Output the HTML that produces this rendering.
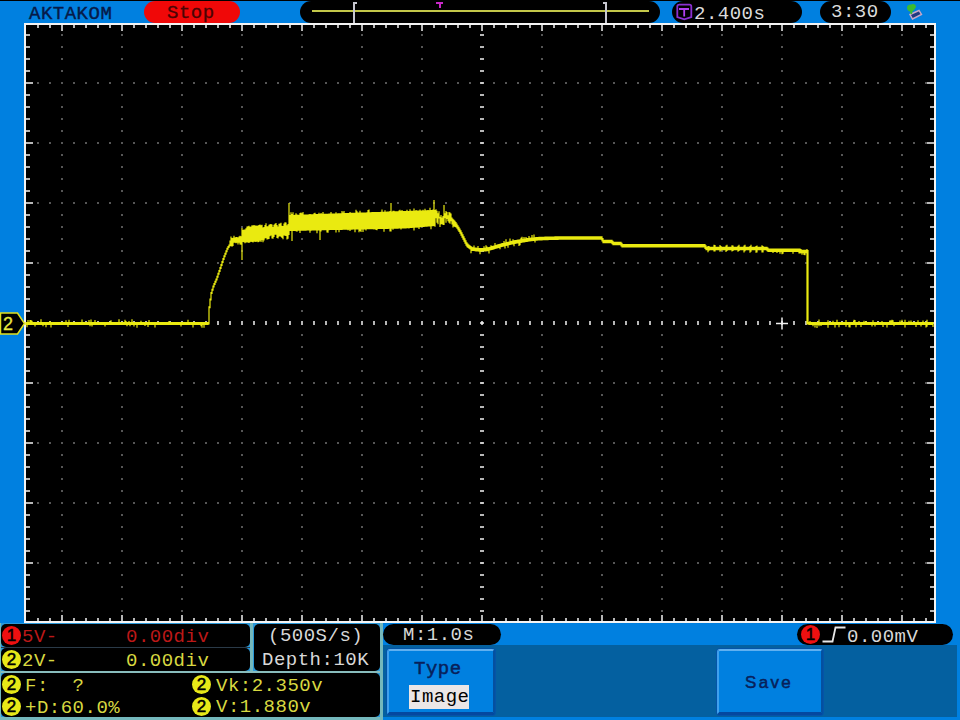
<!DOCTYPE html>
<html><head><meta charset="utf-8">
<style>
html,body{margin:0;padding:0}
body{width:960px;height:720px;overflow:hidden;position:relative;background:#0080e0;font-family:"Liberation Mono",monospace}
.a{position:absolute}
.t{position:absolute;font-size:19px;line-height:19px;letter-spacing:0.5px;white-space:pre}
.pill{position:absolute;background:#000;border-radius:11px}
.box{position:absolute;background:#000;border-radius:5px}
.circ{position:absolute;border-radius:50%;font-size:17px;line-height:20px;-webkit-text-stroke:0.5px #000;text-align:center;color:#000;font-family:"Liberation Sans",sans-serif}
</style></head><body>
<div class="a" style="left:0;top:0;width:960px;height:1px;background:#000"></div>
<div class="t" style="left:29px;top:5px;color:#061a48;-webkit-text-stroke:0.4px #061a48">AKTAKOM</div>
<div class="pill" style="left:144px;top:1px;width:96px;height:22px;background:#f00808"></div>
<div class="t" style="left:167px;top:4px;color:#4a0404;-webkit-text-stroke:0.3px #4a0404">Stop</div>
<div class="pill" style="left:300px;top:1px;width:360px;height:22px"></div>
<div class="a" style="left:312px;top:10px;width:337px;height:2px;background:#c4c84a"></div>
<div class="a" style="left:353px;top:2px;width:2px;height:21px;background:#c8c8d0"></div>
<div class="a" style="left:353px;top:2px;width:4px;height:2px;background:#c8c8d0"></div>
<div class="a" style="left:605px;top:2px;width:2px;height:21px;background:#c8c8d0"></div>
<div class="a" style="left:603px;top:2px;width:4px;height:2px;background:#c8c8d0"></div>
<div class="a" style="left:436px;top:2px;width:7px;height:2px;background:#c828c8"></div>
<div class="a" style="left:439px;top:2px;width:2px;height:6px;background:#c828c8"></div>
<div class="pill" style="left:672px;top:1px;width:130px;height:22px"></div>
<svg class="a" style="left:674px;top:2px" width="20" height="20" viewBox="0 0 20 20">
<path d="M5 2.7h10.5a1.8 1.8 0 0 1 1.8 1.8v10.5l-7 2.3l-7-2.3v-10.5a1.8 1.8 0 0 1 1.8-1.8z" fill="none" stroke="#8a30d0" stroke-width="1.8"/>
<path d="M5 7h10M10.2 7v7.5" stroke="#b040f0" stroke-width="1.8" fill="none"/>
</svg>
<div class="t" style="left:694px;top:5px;color:#dcdcdc">2.400s</div>
<div class="pill" style="left:820px;top:1px;width:71px;height:22px"></div>
<div class="t" style="left:831px;top:3px;color:#dcdcdc">3:30</div>
<svg class="a" style="left:904px;top:2px" width="20" height="20" viewBox="0 0 20 20">
<path d="M6 12.5l9-4l2.5 4l-9 4.5z" fill="#203a80" stroke="#c8a8c8" stroke-width="1.4"/>
<path d="M3 5.5c0-2.5 2.5-3.5 4.5-3c2-1 4.5 0 4.5 2.5l-2 3l-1.5 1.5l-0.5 2.5l-1.5 0l-0.5-2.5c-2-0.5-3-2-3-4z" fill="#3cbc30"/>
</svg>
<svg class="a" style="left:0;top:0" width="960" height="720">
<rect x="24" y="23" width="912" height="600" fill="#f4f4f4"/>
<rect x="26" y="25" width="908" height="596" fill="#000"/>
<path d="M37.2 82.2h1.6v1.6h-1.6zM49.2 82.2h1.6v1.6h-1.6zM61.2 82.2h1.6v1.6h-1.6zM73.2 82.2h1.6v1.6h-1.6zM85.2 82.2h1.6v1.6h-1.6zM97.2 82.2h1.6v1.6h-1.6zM109.2 82.2h1.6v1.6h-1.6zM121.2 82.2h1.6v1.6h-1.6zM133.2 82.2h1.6v1.6h-1.6zM145.2 82.2h1.6v1.6h-1.6zM157.2 82.2h1.6v1.6h-1.6zM169.2 82.2h1.6v1.6h-1.6zM181.2 82.2h1.6v1.6h-1.6zM193.2 82.2h1.6v1.6h-1.6zM205.2 82.2h1.6v1.6h-1.6zM217.2 82.2h1.6v1.6h-1.6zM229.2 82.2h1.6v1.6h-1.6zM241.2 82.2h1.6v1.6h-1.6zM253.2 82.2h1.6v1.6h-1.6zM265.2 82.2h1.6v1.6h-1.6zM277.2 82.2h1.6v1.6h-1.6zM289.2 82.2h1.6v1.6h-1.6zM301.2 82.2h1.6v1.6h-1.6zM313.2 82.2h1.6v1.6h-1.6zM325.2 82.2h1.6v1.6h-1.6zM337.2 82.2h1.6v1.6h-1.6zM349.2 82.2h1.6v1.6h-1.6zM361.2 82.2h1.6v1.6h-1.6zM373.2 82.2h1.6v1.6h-1.6zM385.2 82.2h1.6v1.6h-1.6zM397.2 82.2h1.6v1.6h-1.6zM409.2 82.2h1.6v1.6h-1.6zM421.2 82.2h1.6v1.6h-1.6zM433.2 82.2h1.6v1.6h-1.6zM445.2 82.2h1.6v1.6h-1.6zM457.2 82.2h1.6v1.6h-1.6zM469.2 82.2h1.6v1.6h-1.6zM481.2 82.2h1.6v1.6h-1.6zM493.2 82.2h1.6v1.6h-1.6zM505.2 82.2h1.6v1.6h-1.6zM517.2 82.2h1.6v1.6h-1.6zM529.2 82.2h1.6v1.6h-1.6zM541.2 82.2h1.6v1.6h-1.6zM553.2 82.2h1.6v1.6h-1.6zM565.2 82.2h1.6v1.6h-1.6zM577.2 82.2h1.6v1.6h-1.6zM589.2 82.2h1.6v1.6h-1.6zM601.2 82.2h1.6v1.6h-1.6zM613.2 82.2h1.6v1.6h-1.6zM625.2 82.2h1.6v1.6h-1.6zM637.2 82.2h1.6v1.6h-1.6zM649.2 82.2h1.6v1.6h-1.6zM661.2 82.2h1.6v1.6h-1.6zM673.2 82.2h1.6v1.6h-1.6zM685.2 82.2h1.6v1.6h-1.6zM697.2 82.2h1.6v1.6h-1.6zM709.2 82.2h1.6v1.6h-1.6zM721.2 82.2h1.6v1.6h-1.6zM733.2 82.2h1.6v1.6h-1.6zM745.2 82.2h1.6v1.6h-1.6zM757.2 82.2h1.6v1.6h-1.6zM769.2 82.2h1.6v1.6h-1.6zM781.2 82.2h1.6v1.6h-1.6zM793.2 82.2h1.6v1.6h-1.6zM805.2 82.2h1.6v1.6h-1.6zM817.2 82.2h1.6v1.6h-1.6zM829.2 82.2h1.6v1.6h-1.6zM841.2 82.2h1.6v1.6h-1.6zM853.2 82.2h1.6v1.6h-1.6zM865.2 82.2h1.6v1.6h-1.6zM877.2 82.2h1.6v1.6h-1.6zM889.2 82.2h1.6v1.6h-1.6zM901.2 82.2h1.6v1.6h-1.6zM913.2 82.2h1.6v1.6h-1.6zM925.2 82.2h1.6v1.6h-1.6zM37.2 142.2h1.6v1.6h-1.6zM49.2 142.2h1.6v1.6h-1.6zM61.2 142.2h1.6v1.6h-1.6zM73.2 142.2h1.6v1.6h-1.6zM85.2 142.2h1.6v1.6h-1.6zM97.2 142.2h1.6v1.6h-1.6zM109.2 142.2h1.6v1.6h-1.6zM121.2 142.2h1.6v1.6h-1.6zM133.2 142.2h1.6v1.6h-1.6zM145.2 142.2h1.6v1.6h-1.6zM157.2 142.2h1.6v1.6h-1.6zM169.2 142.2h1.6v1.6h-1.6zM181.2 142.2h1.6v1.6h-1.6zM193.2 142.2h1.6v1.6h-1.6zM205.2 142.2h1.6v1.6h-1.6zM217.2 142.2h1.6v1.6h-1.6zM229.2 142.2h1.6v1.6h-1.6zM241.2 142.2h1.6v1.6h-1.6zM253.2 142.2h1.6v1.6h-1.6zM265.2 142.2h1.6v1.6h-1.6zM277.2 142.2h1.6v1.6h-1.6zM289.2 142.2h1.6v1.6h-1.6zM301.2 142.2h1.6v1.6h-1.6zM313.2 142.2h1.6v1.6h-1.6zM325.2 142.2h1.6v1.6h-1.6zM337.2 142.2h1.6v1.6h-1.6zM349.2 142.2h1.6v1.6h-1.6zM361.2 142.2h1.6v1.6h-1.6zM373.2 142.2h1.6v1.6h-1.6zM385.2 142.2h1.6v1.6h-1.6zM397.2 142.2h1.6v1.6h-1.6zM409.2 142.2h1.6v1.6h-1.6zM421.2 142.2h1.6v1.6h-1.6zM433.2 142.2h1.6v1.6h-1.6zM445.2 142.2h1.6v1.6h-1.6zM457.2 142.2h1.6v1.6h-1.6zM469.2 142.2h1.6v1.6h-1.6zM481.2 142.2h1.6v1.6h-1.6zM493.2 142.2h1.6v1.6h-1.6zM505.2 142.2h1.6v1.6h-1.6zM517.2 142.2h1.6v1.6h-1.6zM529.2 142.2h1.6v1.6h-1.6zM541.2 142.2h1.6v1.6h-1.6zM553.2 142.2h1.6v1.6h-1.6zM565.2 142.2h1.6v1.6h-1.6zM577.2 142.2h1.6v1.6h-1.6zM589.2 142.2h1.6v1.6h-1.6zM601.2 142.2h1.6v1.6h-1.6zM613.2 142.2h1.6v1.6h-1.6zM625.2 142.2h1.6v1.6h-1.6zM637.2 142.2h1.6v1.6h-1.6zM649.2 142.2h1.6v1.6h-1.6zM661.2 142.2h1.6v1.6h-1.6zM673.2 142.2h1.6v1.6h-1.6zM685.2 142.2h1.6v1.6h-1.6zM697.2 142.2h1.6v1.6h-1.6zM709.2 142.2h1.6v1.6h-1.6zM721.2 142.2h1.6v1.6h-1.6zM733.2 142.2h1.6v1.6h-1.6zM745.2 142.2h1.6v1.6h-1.6zM757.2 142.2h1.6v1.6h-1.6zM769.2 142.2h1.6v1.6h-1.6zM781.2 142.2h1.6v1.6h-1.6zM793.2 142.2h1.6v1.6h-1.6zM805.2 142.2h1.6v1.6h-1.6zM817.2 142.2h1.6v1.6h-1.6zM829.2 142.2h1.6v1.6h-1.6zM841.2 142.2h1.6v1.6h-1.6zM853.2 142.2h1.6v1.6h-1.6zM865.2 142.2h1.6v1.6h-1.6zM877.2 142.2h1.6v1.6h-1.6zM889.2 142.2h1.6v1.6h-1.6zM901.2 142.2h1.6v1.6h-1.6zM913.2 142.2h1.6v1.6h-1.6zM925.2 142.2h1.6v1.6h-1.6zM37.2 202.2h1.6v1.6h-1.6zM49.2 202.2h1.6v1.6h-1.6zM61.2 202.2h1.6v1.6h-1.6zM73.2 202.2h1.6v1.6h-1.6zM85.2 202.2h1.6v1.6h-1.6zM97.2 202.2h1.6v1.6h-1.6zM109.2 202.2h1.6v1.6h-1.6zM121.2 202.2h1.6v1.6h-1.6zM133.2 202.2h1.6v1.6h-1.6zM145.2 202.2h1.6v1.6h-1.6zM157.2 202.2h1.6v1.6h-1.6zM169.2 202.2h1.6v1.6h-1.6zM181.2 202.2h1.6v1.6h-1.6zM193.2 202.2h1.6v1.6h-1.6zM205.2 202.2h1.6v1.6h-1.6zM217.2 202.2h1.6v1.6h-1.6zM229.2 202.2h1.6v1.6h-1.6zM241.2 202.2h1.6v1.6h-1.6zM253.2 202.2h1.6v1.6h-1.6zM265.2 202.2h1.6v1.6h-1.6zM277.2 202.2h1.6v1.6h-1.6zM289.2 202.2h1.6v1.6h-1.6zM301.2 202.2h1.6v1.6h-1.6zM313.2 202.2h1.6v1.6h-1.6zM325.2 202.2h1.6v1.6h-1.6zM337.2 202.2h1.6v1.6h-1.6zM349.2 202.2h1.6v1.6h-1.6zM361.2 202.2h1.6v1.6h-1.6zM373.2 202.2h1.6v1.6h-1.6zM385.2 202.2h1.6v1.6h-1.6zM397.2 202.2h1.6v1.6h-1.6zM409.2 202.2h1.6v1.6h-1.6zM421.2 202.2h1.6v1.6h-1.6zM433.2 202.2h1.6v1.6h-1.6zM445.2 202.2h1.6v1.6h-1.6zM457.2 202.2h1.6v1.6h-1.6zM469.2 202.2h1.6v1.6h-1.6zM481.2 202.2h1.6v1.6h-1.6zM493.2 202.2h1.6v1.6h-1.6zM505.2 202.2h1.6v1.6h-1.6zM517.2 202.2h1.6v1.6h-1.6zM529.2 202.2h1.6v1.6h-1.6zM541.2 202.2h1.6v1.6h-1.6zM553.2 202.2h1.6v1.6h-1.6zM565.2 202.2h1.6v1.6h-1.6zM577.2 202.2h1.6v1.6h-1.6zM589.2 202.2h1.6v1.6h-1.6zM601.2 202.2h1.6v1.6h-1.6zM613.2 202.2h1.6v1.6h-1.6zM625.2 202.2h1.6v1.6h-1.6zM637.2 202.2h1.6v1.6h-1.6zM649.2 202.2h1.6v1.6h-1.6zM661.2 202.2h1.6v1.6h-1.6zM673.2 202.2h1.6v1.6h-1.6zM685.2 202.2h1.6v1.6h-1.6zM697.2 202.2h1.6v1.6h-1.6zM709.2 202.2h1.6v1.6h-1.6zM721.2 202.2h1.6v1.6h-1.6zM733.2 202.2h1.6v1.6h-1.6zM745.2 202.2h1.6v1.6h-1.6zM757.2 202.2h1.6v1.6h-1.6zM769.2 202.2h1.6v1.6h-1.6zM781.2 202.2h1.6v1.6h-1.6zM793.2 202.2h1.6v1.6h-1.6zM805.2 202.2h1.6v1.6h-1.6zM817.2 202.2h1.6v1.6h-1.6zM829.2 202.2h1.6v1.6h-1.6zM841.2 202.2h1.6v1.6h-1.6zM853.2 202.2h1.6v1.6h-1.6zM865.2 202.2h1.6v1.6h-1.6zM877.2 202.2h1.6v1.6h-1.6zM889.2 202.2h1.6v1.6h-1.6zM901.2 202.2h1.6v1.6h-1.6zM913.2 202.2h1.6v1.6h-1.6zM925.2 202.2h1.6v1.6h-1.6zM37.2 262.2h1.6v1.6h-1.6zM49.2 262.2h1.6v1.6h-1.6zM61.2 262.2h1.6v1.6h-1.6zM73.2 262.2h1.6v1.6h-1.6zM85.2 262.2h1.6v1.6h-1.6zM97.2 262.2h1.6v1.6h-1.6zM109.2 262.2h1.6v1.6h-1.6zM121.2 262.2h1.6v1.6h-1.6zM133.2 262.2h1.6v1.6h-1.6zM145.2 262.2h1.6v1.6h-1.6zM157.2 262.2h1.6v1.6h-1.6zM169.2 262.2h1.6v1.6h-1.6zM181.2 262.2h1.6v1.6h-1.6zM193.2 262.2h1.6v1.6h-1.6zM205.2 262.2h1.6v1.6h-1.6zM217.2 262.2h1.6v1.6h-1.6zM229.2 262.2h1.6v1.6h-1.6zM241.2 262.2h1.6v1.6h-1.6zM253.2 262.2h1.6v1.6h-1.6zM265.2 262.2h1.6v1.6h-1.6zM277.2 262.2h1.6v1.6h-1.6zM289.2 262.2h1.6v1.6h-1.6zM301.2 262.2h1.6v1.6h-1.6zM313.2 262.2h1.6v1.6h-1.6zM325.2 262.2h1.6v1.6h-1.6zM337.2 262.2h1.6v1.6h-1.6zM349.2 262.2h1.6v1.6h-1.6zM361.2 262.2h1.6v1.6h-1.6zM373.2 262.2h1.6v1.6h-1.6zM385.2 262.2h1.6v1.6h-1.6zM397.2 262.2h1.6v1.6h-1.6zM409.2 262.2h1.6v1.6h-1.6zM421.2 262.2h1.6v1.6h-1.6zM433.2 262.2h1.6v1.6h-1.6zM445.2 262.2h1.6v1.6h-1.6zM457.2 262.2h1.6v1.6h-1.6zM469.2 262.2h1.6v1.6h-1.6zM481.2 262.2h1.6v1.6h-1.6zM493.2 262.2h1.6v1.6h-1.6zM505.2 262.2h1.6v1.6h-1.6zM517.2 262.2h1.6v1.6h-1.6zM529.2 262.2h1.6v1.6h-1.6zM541.2 262.2h1.6v1.6h-1.6zM553.2 262.2h1.6v1.6h-1.6zM565.2 262.2h1.6v1.6h-1.6zM577.2 262.2h1.6v1.6h-1.6zM589.2 262.2h1.6v1.6h-1.6zM601.2 262.2h1.6v1.6h-1.6zM613.2 262.2h1.6v1.6h-1.6zM625.2 262.2h1.6v1.6h-1.6zM637.2 262.2h1.6v1.6h-1.6zM649.2 262.2h1.6v1.6h-1.6zM661.2 262.2h1.6v1.6h-1.6zM673.2 262.2h1.6v1.6h-1.6zM685.2 262.2h1.6v1.6h-1.6zM697.2 262.2h1.6v1.6h-1.6zM709.2 262.2h1.6v1.6h-1.6zM721.2 262.2h1.6v1.6h-1.6zM733.2 262.2h1.6v1.6h-1.6zM745.2 262.2h1.6v1.6h-1.6zM757.2 262.2h1.6v1.6h-1.6zM769.2 262.2h1.6v1.6h-1.6zM781.2 262.2h1.6v1.6h-1.6zM793.2 262.2h1.6v1.6h-1.6zM805.2 262.2h1.6v1.6h-1.6zM817.2 262.2h1.6v1.6h-1.6zM829.2 262.2h1.6v1.6h-1.6zM841.2 262.2h1.6v1.6h-1.6zM853.2 262.2h1.6v1.6h-1.6zM865.2 262.2h1.6v1.6h-1.6zM877.2 262.2h1.6v1.6h-1.6zM889.2 262.2h1.6v1.6h-1.6zM901.2 262.2h1.6v1.6h-1.6zM913.2 262.2h1.6v1.6h-1.6zM925.2 262.2h1.6v1.6h-1.6zM37.2 382.2h1.6v1.6h-1.6zM49.2 382.2h1.6v1.6h-1.6zM61.2 382.2h1.6v1.6h-1.6zM73.2 382.2h1.6v1.6h-1.6zM85.2 382.2h1.6v1.6h-1.6zM97.2 382.2h1.6v1.6h-1.6zM109.2 382.2h1.6v1.6h-1.6zM121.2 382.2h1.6v1.6h-1.6zM133.2 382.2h1.6v1.6h-1.6zM145.2 382.2h1.6v1.6h-1.6zM157.2 382.2h1.6v1.6h-1.6zM169.2 382.2h1.6v1.6h-1.6zM181.2 382.2h1.6v1.6h-1.6zM193.2 382.2h1.6v1.6h-1.6zM205.2 382.2h1.6v1.6h-1.6zM217.2 382.2h1.6v1.6h-1.6zM229.2 382.2h1.6v1.6h-1.6zM241.2 382.2h1.6v1.6h-1.6zM253.2 382.2h1.6v1.6h-1.6zM265.2 382.2h1.6v1.6h-1.6zM277.2 382.2h1.6v1.6h-1.6zM289.2 382.2h1.6v1.6h-1.6zM301.2 382.2h1.6v1.6h-1.6zM313.2 382.2h1.6v1.6h-1.6zM325.2 382.2h1.6v1.6h-1.6zM337.2 382.2h1.6v1.6h-1.6zM349.2 382.2h1.6v1.6h-1.6zM361.2 382.2h1.6v1.6h-1.6zM373.2 382.2h1.6v1.6h-1.6zM385.2 382.2h1.6v1.6h-1.6zM397.2 382.2h1.6v1.6h-1.6zM409.2 382.2h1.6v1.6h-1.6zM421.2 382.2h1.6v1.6h-1.6zM433.2 382.2h1.6v1.6h-1.6zM445.2 382.2h1.6v1.6h-1.6zM457.2 382.2h1.6v1.6h-1.6zM469.2 382.2h1.6v1.6h-1.6zM481.2 382.2h1.6v1.6h-1.6zM493.2 382.2h1.6v1.6h-1.6zM505.2 382.2h1.6v1.6h-1.6zM517.2 382.2h1.6v1.6h-1.6zM529.2 382.2h1.6v1.6h-1.6zM541.2 382.2h1.6v1.6h-1.6zM553.2 382.2h1.6v1.6h-1.6zM565.2 382.2h1.6v1.6h-1.6zM577.2 382.2h1.6v1.6h-1.6zM589.2 382.2h1.6v1.6h-1.6zM601.2 382.2h1.6v1.6h-1.6zM613.2 382.2h1.6v1.6h-1.6zM625.2 382.2h1.6v1.6h-1.6zM637.2 382.2h1.6v1.6h-1.6zM649.2 382.2h1.6v1.6h-1.6zM661.2 382.2h1.6v1.6h-1.6zM673.2 382.2h1.6v1.6h-1.6zM685.2 382.2h1.6v1.6h-1.6zM697.2 382.2h1.6v1.6h-1.6zM709.2 382.2h1.6v1.6h-1.6zM721.2 382.2h1.6v1.6h-1.6zM733.2 382.2h1.6v1.6h-1.6zM745.2 382.2h1.6v1.6h-1.6zM757.2 382.2h1.6v1.6h-1.6zM769.2 382.2h1.6v1.6h-1.6zM781.2 382.2h1.6v1.6h-1.6zM793.2 382.2h1.6v1.6h-1.6zM805.2 382.2h1.6v1.6h-1.6zM817.2 382.2h1.6v1.6h-1.6zM829.2 382.2h1.6v1.6h-1.6zM841.2 382.2h1.6v1.6h-1.6zM853.2 382.2h1.6v1.6h-1.6zM865.2 382.2h1.6v1.6h-1.6zM877.2 382.2h1.6v1.6h-1.6zM889.2 382.2h1.6v1.6h-1.6zM901.2 382.2h1.6v1.6h-1.6zM913.2 382.2h1.6v1.6h-1.6zM925.2 382.2h1.6v1.6h-1.6zM37.2 442.2h1.6v1.6h-1.6zM49.2 442.2h1.6v1.6h-1.6zM61.2 442.2h1.6v1.6h-1.6zM73.2 442.2h1.6v1.6h-1.6zM85.2 442.2h1.6v1.6h-1.6zM97.2 442.2h1.6v1.6h-1.6zM109.2 442.2h1.6v1.6h-1.6zM121.2 442.2h1.6v1.6h-1.6zM133.2 442.2h1.6v1.6h-1.6zM145.2 442.2h1.6v1.6h-1.6zM157.2 442.2h1.6v1.6h-1.6zM169.2 442.2h1.6v1.6h-1.6zM181.2 442.2h1.6v1.6h-1.6zM193.2 442.2h1.6v1.6h-1.6zM205.2 442.2h1.6v1.6h-1.6zM217.2 442.2h1.6v1.6h-1.6zM229.2 442.2h1.6v1.6h-1.6zM241.2 442.2h1.6v1.6h-1.6zM253.2 442.2h1.6v1.6h-1.6zM265.2 442.2h1.6v1.6h-1.6zM277.2 442.2h1.6v1.6h-1.6zM289.2 442.2h1.6v1.6h-1.6zM301.2 442.2h1.6v1.6h-1.6zM313.2 442.2h1.6v1.6h-1.6zM325.2 442.2h1.6v1.6h-1.6zM337.2 442.2h1.6v1.6h-1.6zM349.2 442.2h1.6v1.6h-1.6zM361.2 442.2h1.6v1.6h-1.6zM373.2 442.2h1.6v1.6h-1.6zM385.2 442.2h1.6v1.6h-1.6zM397.2 442.2h1.6v1.6h-1.6zM409.2 442.2h1.6v1.6h-1.6zM421.2 442.2h1.6v1.6h-1.6zM433.2 442.2h1.6v1.6h-1.6zM445.2 442.2h1.6v1.6h-1.6zM457.2 442.2h1.6v1.6h-1.6zM469.2 442.2h1.6v1.6h-1.6zM481.2 442.2h1.6v1.6h-1.6zM493.2 442.2h1.6v1.6h-1.6zM505.2 442.2h1.6v1.6h-1.6zM517.2 442.2h1.6v1.6h-1.6zM529.2 442.2h1.6v1.6h-1.6zM541.2 442.2h1.6v1.6h-1.6zM553.2 442.2h1.6v1.6h-1.6zM565.2 442.2h1.6v1.6h-1.6zM577.2 442.2h1.6v1.6h-1.6zM589.2 442.2h1.6v1.6h-1.6zM601.2 442.2h1.6v1.6h-1.6zM613.2 442.2h1.6v1.6h-1.6zM625.2 442.2h1.6v1.6h-1.6zM637.2 442.2h1.6v1.6h-1.6zM649.2 442.2h1.6v1.6h-1.6zM661.2 442.2h1.6v1.6h-1.6zM673.2 442.2h1.6v1.6h-1.6zM685.2 442.2h1.6v1.6h-1.6zM697.2 442.2h1.6v1.6h-1.6zM709.2 442.2h1.6v1.6h-1.6zM721.2 442.2h1.6v1.6h-1.6zM733.2 442.2h1.6v1.6h-1.6zM745.2 442.2h1.6v1.6h-1.6zM757.2 442.2h1.6v1.6h-1.6zM769.2 442.2h1.6v1.6h-1.6zM781.2 442.2h1.6v1.6h-1.6zM793.2 442.2h1.6v1.6h-1.6zM805.2 442.2h1.6v1.6h-1.6zM817.2 442.2h1.6v1.6h-1.6zM829.2 442.2h1.6v1.6h-1.6zM841.2 442.2h1.6v1.6h-1.6zM853.2 442.2h1.6v1.6h-1.6zM865.2 442.2h1.6v1.6h-1.6zM877.2 442.2h1.6v1.6h-1.6zM889.2 442.2h1.6v1.6h-1.6zM901.2 442.2h1.6v1.6h-1.6zM913.2 442.2h1.6v1.6h-1.6zM925.2 442.2h1.6v1.6h-1.6zM37.2 502.2h1.6v1.6h-1.6zM49.2 502.2h1.6v1.6h-1.6zM61.2 502.2h1.6v1.6h-1.6zM73.2 502.2h1.6v1.6h-1.6zM85.2 502.2h1.6v1.6h-1.6zM97.2 502.2h1.6v1.6h-1.6zM109.2 502.2h1.6v1.6h-1.6zM121.2 502.2h1.6v1.6h-1.6zM133.2 502.2h1.6v1.6h-1.6zM145.2 502.2h1.6v1.6h-1.6zM157.2 502.2h1.6v1.6h-1.6zM169.2 502.2h1.6v1.6h-1.6zM181.2 502.2h1.6v1.6h-1.6zM193.2 502.2h1.6v1.6h-1.6zM205.2 502.2h1.6v1.6h-1.6zM217.2 502.2h1.6v1.6h-1.6zM229.2 502.2h1.6v1.6h-1.6zM241.2 502.2h1.6v1.6h-1.6zM253.2 502.2h1.6v1.6h-1.6zM265.2 502.2h1.6v1.6h-1.6zM277.2 502.2h1.6v1.6h-1.6zM289.2 502.2h1.6v1.6h-1.6zM301.2 502.2h1.6v1.6h-1.6zM313.2 502.2h1.6v1.6h-1.6zM325.2 502.2h1.6v1.6h-1.6zM337.2 502.2h1.6v1.6h-1.6zM349.2 502.2h1.6v1.6h-1.6zM361.2 502.2h1.6v1.6h-1.6zM373.2 502.2h1.6v1.6h-1.6zM385.2 502.2h1.6v1.6h-1.6zM397.2 502.2h1.6v1.6h-1.6zM409.2 502.2h1.6v1.6h-1.6zM421.2 502.2h1.6v1.6h-1.6zM433.2 502.2h1.6v1.6h-1.6zM445.2 502.2h1.6v1.6h-1.6zM457.2 502.2h1.6v1.6h-1.6zM469.2 502.2h1.6v1.6h-1.6zM481.2 502.2h1.6v1.6h-1.6zM493.2 502.2h1.6v1.6h-1.6zM505.2 502.2h1.6v1.6h-1.6zM517.2 502.2h1.6v1.6h-1.6zM529.2 502.2h1.6v1.6h-1.6zM541.2 502.2h1.6v1.6h-1.6zM553.2 502.2h1.6v1.6h-1.6zM565.2 502.2h1.6v1.6h-1.6zM577.2 502.2h1.6v1.6h-1.6zM589.2 502.2h1.6v1.6h-1.6zM601.2 502.2h1.6v1.6h-1.6zM613.2 502.2h1.6v1.6h-1.6zM625.2 502.2h1.6v1.6h-1.6zM637.2 502.2h1.6v1.6h-1.6zM649.2 502.2h1.6v1.6h-1.6zM661.2 502.2h1.6v1.6h-1.6zM673.2 502.2h1.6v1.6h-1.6zM685.2 502.2h1.6v1.6h-1.6zM697.2 502.2h1.6v1.6h-1.6zM709.2 502.2h1.6v1.6h-1.6zM721.2 502.2h1.6v1.6h-1.6zM733.2 502.2h1.6v1.6h-1.6zM745.2 502.2h1.6v1.6h-1.6zM757.2 502.2h1.6v1.6h-1.6zM769.2 502.2h1.6v1.6h-1.6zM781.2 502.2h1.6v1.6h-1.6zM793.2 502.2h1.6v1.6h-1.6zM805.2 502.2h1.6v1.6h-1.6zM817.2 502.2h1.6v1.6h-1.6zM829.2 502.2h1.6v1.6h-1.6zM841.2 502.2h1.6v1.6h-1.6zM853.2 502.2h1.6v1.6h-1.6zM865.2 502.2h1.6v1.6h-1.6zM877.2 502.2h1.6v1.6h-1.6zM889.2 502.2h1.6v1.6h-1.6zM901.2 502.2h1.6v1.6h-1.6zM913.2 502.2h1.6v1.6h-1.6zM925.2 502.2h1.6v1.6h-1.6zM37.2 562.2h1.6v1.6h-1.6zM49.2 562.2h1.6v1.6h-1.6zM61.2 562.2h1.6v1.6h-1.6zM73.2 562.2h1.6v1.6h-1.6zM85.2 562.2h1.6v1.6h-1.6zM97.2 562.2h1.6v1.6h-1.6zM109.2 562.2h1.6v1.6h-1.6zM121.2 562.2h1.6v1.6h-1.6zM133.2 562.2h1.6v1.6h-1.6zM145.2 562.2h1.6v1.6h-1.6zM157.2 562.2h1.6v1.6h-1.6zM169.2 562.2h1.6v1.6h-1.6zM181.2 562.2h1.6v1.6h-1.6zM193.2 562.2h1.6v1.6h-1.6zM205.2 562.2h1.6v1.6h-1.6zM217.2 562.2h1.6v1.6h-1.6zM229.2 562.2h1.6v1.6h-1.6zM241.2 562.2h1.6v1.6h-1.6zM253.2 562.2h1.6v1.6h-1.6zM265.2 562.2h1.6v1.6h-1.6zM277.2 562.2h1.6v1.6h-1.6zM289.2 562.2h1.6v1.6h-1.6zM301.2 562.2h1.6v1.6h-1.6zM313.2 562.2h1.6v1.6h-1.6zM325.2 562.2h1.6v1.6h-1.6zM337.2 562.2h1.6v1.6h-1.6zM349.2 562.2h1.6v1.6h-1.6zM361.2 562.2h1.6v1.6h-1.6zM373.2 562.2h1.6v1.6h-1.6zM385.2 562.2h1.6v1.6h-1.6zM397.2 562.2h1.6v1.6h-1.6zM409.2 562.2h1.6v1.6h-1.6zM421.2 562.2h1.6v1.6h-1.6zM433.2 562.2h1.6v1.6h-1.6zM445.2 562.2h1.6v1.6h-1.6zM457.2 562.2h1.6v1.6h-1.6zM469.2 562.2h1.6v1.6h-1.6zM481.2 562.2h1.6v1.6h-1.6zM493.2 562.2h1.6v1.6h-1.6zM505.2 562.2h1.6v1.6h-1.6zM517.2 562.2h1.6v1.6h-1.6zM529.2 562.2h1.6v1.6h-1.6zM541.2 562.2h1.6v1.6h-1.6zM553.2 562.2h1.6v1.6h-1.6zM565.2 562.2h1.6v1.6h-1.6zM577.2 562.2h1.6v1.6h-1.6zM589.2 562.2h1.6v1.6h-1.6zM601.2 562.2h1.6v1.6h-1.6zM613.2 562.2h1.6v1.6h-1.6zM625.2 562.2h1.6v1.6h-1.6zM637.2 562.2h1.6v1.6h-1.6zM649.2 562.2h1.6v1.6h-1.6zM661.2 562.2h1.6v1.6h-1.6zM673.2 562.2h1.6v1.6h-1.6zM685.2 562.2h1.6v1.6h-1.6zM697.2 562.2h1.6v1.6h-1.6zM709.2 562.2h1.6v1.6h-1.6zM721.2 562.2h1.6v1.6h-1.6zM733.2 562.2h1.6v1.6h-1.6zM745.2 562.2h1.6v1.6h-1.6zM757.2 562.2h1.6v1.6h-1.6zM769.2 562.2h1.6v1.6h-1.6zM781.2 562.2h1.6v1.6h-1.6zM793.2 562.2h1.6v1.6h-1.6zM805.2 562.2h1.6v1.6h-1.6zM817.2 562.2h1.6v1.6h-1.6zM829.2 562.2h1.6v1.6h-1.6zM841.2 562.2h1.6v1.6h-1.6zM853.2 562.2h1.6v1.6h-1.6zM865.2 562.2h1.6v1.6h-1.6zM877.2 562.2h1.6v1.6h-1.6zM889.2 562.2h1.6v1.6h-1.6zM901.2 562.2h1.6v1.6h-1.6zM913.2 562.2h1.6v1.6h-1.6zM925.2 562.2h1.6v1.6h-1.6zM61.2 34.2h1.6v1.6h-1.6zM61.2 46.2h1.6v1.6h-1.6zM61.2 58.2h1.6v1.6h-1.6zM61.2 70.2h1.6v1.6h-1.6zM61.2 94.2h1.6v1.6h-1.6zM61.2 106.2h1.6v1.6h-1.6zM61.2 118.2h1.6v1.6h-1.6zM61.2 130.2h1.6v1.6h-1.6zM61.2 154.2h1.6v1.6h-1.6zM61.2 166.2h1.6v1.6h-1.6zM61.2 178.2h1.6v1.6h-1.6zM61.2 190.2h1.6v1.6h-1.6zM61.2 214.2h1.6v1.6h-1.6zM61.2 226.2h1.6v1.6h-1.6zM61.2 238.2h1.6v1.6h-1.6zM61.2 250.2h1.6v1.6h-1.6zM61.2 274.2h1.6v1.6h-1.6zM61.2 286.2h1.6v1.6h-1.6zM61.2 298.2h1.6v1.6h-1.6zM61.2 310.2h1.6v1.6h-1.6zM61.2 334.2h1.6v1.6h-1.6zM61.2 346.2h1.6v1.6h-1.6zM61.2 358.2h1.6v1.6h-1.6zM61.2 370.2h1.6v1.6h-1.6zM61.2 394.2h1.6v1.6h-1.6zM61.2 406.2h1.6v1.6h-1.6zM61.2 418.2h1.6v1.6h-1.6zM61.2 430.2h1.6v1.6h-1.6zM61.2 454.2h1.6v1.6h-1.6zM61.2 466.2h1.6v1.6h-1.6zM61.2 478.2h1.6v1.6h-1.6zM61.2 490.2h1.6v1.6h-1.6zM61.2 514.2h1.6v1.6h-1.6zM61.2 526.2h1.6v1.6h-1.6zM61.2 538.2h1.6v1.6h-1.6zM61.2 550.2h1.6v1.6h-1.6zM61.2 574.2h1.6v1.6h-1.6zM61.2 586.2h1.6v1.6h-1.6zM61.2 598.2h1.6v1.6h-1.6zM61.2 610.2h1.6v1.6h-1.6zM121.2 34.2h1.6v1.6h-1.6zM121.2 46.2h1.6v1.6h-1.6zM121.2 58.2h1.6v1.6h-1.6zM121.2 70.2h1.6v1.6h-1.6zM121.2 94.2h1.6v1.6h-1.6zM121.2 106.2h1.6v1.6h-1.6zM121.2 118.2h1.6v1.6h-1.6zM121.2 130.2h1.6v1.6h-1.6zM121.2 154.2h1.6v1.6h-1.6zM121.2 166.2h1.6v1.6h-1.6zM121.2 178.2h1.6v1.6h-1.6zM121.2 190.2h1.6v1.6h-1.6zM121.2 214.2h1.6v1.6h-1.6zM121.2 226.2h1.6v1.6h-1.6zM121.2 238.2h1.6v1.6h-1.6zM121.2 250.2h1.6v1.6h-1.6zM121.2 274.2h1.6v1.6h-1.6zM121.2 286.2h1.6v1.6h-1.6zM121.2 298.2h1.6v1.6h-1.6zM121.2 310.2h1.6v1.6h-1.6zM121.2 334.2h1.6v1.6h-1.6zM121.2 346.2h1.6v1.6h-1.6zM121.2 358.2h1.6v1.6h-1.6zM121.2 370.2h1.6v1.6h-1.6zM121.2 394.2h1.6v1.6h-1.6zM121.2 406.2h1.6v1.6h-1.6zM121.2 418.2h1.6v1.6h-1.6zM121.2 430.2h1.6v1.6h-1.6zM121.2 454.2h1.6v1.6h-1.6zM121.2 466.2h1.6v1.6h-1.6zM121.2 478.2h1.6v1.6h-1.6zM121.2 490.2h1.6v1.6h-1.6zM121.2 514.2h1.6v1.6h-1.6zM121.2 526.2h1.6v1.6h-1.6zM121.2 538.2h1.6v1.6h-1.6zM121.2 550.2h1.6v1.6h-1.6zM121.2 574.2h1.6v1.6h-1.6zM121.2 586.2h1.6v1.6h-1.6zM121.2 598.2h1.6v1.6h-1.6zM121.2 610.2h1.6v1.6h-1.6zM181.2 34.2h1.6v1.6h-1.6zM181.2 46.2h1.6v1.6h-1.6zM181.2 58.2h1.6v1.6h-1.6zM181.2 70.2h1.6v1.6h-1.6zM181.2 94.2h1.6v1.6h-1.6zM181.2 106.2h1.6v1.6h-1.6zM181.2 118.2h1.6v1.6h-1.6zM181.2 130.2h1.6v1.6h-1.6zM181.2 154.2h1.6v1.6h-1.6zM181.2 166.2h1.6v1.6h-1.6zM181.2 178.2h1.6v1.6h-1.6zM181.2 190.2h1.6v1.6h-1.6zM181.2 214.2h1.6v1.6h-1.6zM181.2 226.2h1.6v1.6h-1.6zM181.2 238.2h1.6v1.6h-1.6zM181.2 250.2h1.6v1.6h-1.6zM181.2 274.2h1.6v1.6h-1.6zM181.2 286.2h1.6v1.6h-1.6zM181.2 298.2h1.6v1.6h-1.6zM181.2 310.2h1.6v1.6h-1.6zM181.2 334.2h1.6v1.6h-1.6zM181.2 346.2h1.6v1.6h-1.6zM181.2 358.2h1.6v1.6h-1.6zM181.2 370.2h1.6v1.6h-1.6zM181.2 394.2h1.6v1.6h-1.6zM181.2 406.2h1.6v1.6h-1.6zM181.2 418.2h1.6v1.6h-1.6zM181.2 430.2h1.6v1.6h-1.6zM181.2 454.2h1.6v1.6h-1.6zM181.2 466.2h1.6v1.6h-1.6zM181.2 478.2h1.6v1.6h-1.6zM181.2 490.2h1.6v1.6h-1.6zM181.2 514.2h1.6v1.6h-1.6zM181.2 526.2h1.6v1.6h-1.6zM181.2 538.2h1.6v1.6h-1.6zM181.2 550.2h1.6v1.6h-1.6zM181.2 574.2h1.6v1.6h-1.6zM181.2 586.2h1.6v1.6h-1.6zM181.2 598.2h1.6v1.6h-1.6zM181.2 610.2h1.6v1.6h-1.6zM241.2 34.2h1.6v1.6h-1.6zM241.2 46.2h1.6v1.6h-1.6zM241.2 58.2h1.6v1.6h-1.6zM241.2 70.2h1.6v1.6h-1.6zM241.2 94.2h1.6v1.6h-1.6zM241.2 106.2h1.6v1.6h-1.6zM241.2 118.2h1.6v1.6h-1.6zM241.2 130.2h1.6v1.6h-1.6zM241.2 154.2h1.6v1.6h-1.6zM241.2 166.2h1.6v1.6h-1.6zM241.2 178.2h1.6v1.6h-1.6zM241.2 190.2h1.6v1.6h-1.6zM241.2 214.2h1.6v1.6h-1.6zM241.2 226.2h1.6v1.6h-1.6zM241.2 238.2h1.6v1.6h-1.6zM241.2 250.2h1.6v1.6h-1.6zM241.2 274.2h1.6v1.6h-1.6zM241.2 286.2h1.6v1.6h-1.6zM241.2 298.2h1.6v1.6h-1.6zM241.2 310.2h1.6v1.6h-1.6zM241.2 334.2h1.6v1.6h-1.6zM241.2 346.2h1.6v1.6h-1.6zM241.2 358.2h1.6v1.6h-1.6zM241.2 370.2h1.6v1.6h-1.6zM241.2 394.2h1.6v1.6h-1.6zM241.2 406.2h1.6v1.6h-1.6zM241.2 418.2h1.6v1.6h-1.6zM241.2 430.2h1.6v1.6h-1.6zM241.2 454.2h1.6v1.6h-1.6zM241.2 466.2h1.6v1.6h-1.6zM241.2 478.2h1.6v1.6h-1.6zM241.2 490.2h1.6v1.6h-1.6zM241.2 514.2h1.6v1.6h-1.6zM241.2 526.2h1.6v1.6h-1.6zM241.2 538.2h1.6v1.6h-1.6zM241.2 550.2h1.6v1.6h-1.6zM241.2 574.2h1.6v1.6h-1.6zM241.2 586.2h1.6v1.6h-1.6zM241.2 598.2h1.6v1.6h-1.6zM241.2 610.2h1.6v1.6h-1.6zM301.2 34.2h1.6v1.6h-1.6zM301.2 46.2h1.6v1.6h-1.6zM301.2 58.2h1.6v1.6h-1.6zM301.2 70.2h1.6v1.6h-1.6zM301.2 94.2h1.6v1.6h-1.6zM301.2 106.2h1.6v1.6h-1.6zM301.2 118.2h1.6v1.6h-1.6zM301.2 130.2h1.6v1.6h-1.6zM301.2 154.2h1.6v1.6h-1.6zM301.2 166.2h1.6v1.6h-1.6zM301.2 178.2h1.6v1.6h-1.6zM301.2 190.2h1.6v1.6h-1.6zM301.2 214.2h1.6v1.6h-1.6zM301.2 226.2h1.6v1.6h-1.6zM301.2 238.2h1.6v1.6h-1.6zM301.2 250.2h1.6v1.6h-1.6zM301.2 274.2h1.6v1.6h-1.6zM301.2 286.2h1.6v1.6h-1.6zM301.2 298.2h1.6v1.6h-1.6zM301.2 310.2h1.6v1.6h-1.6zM301.2 334.2h1.6v1.6h-1.6zM301.2 346.2h1.6v1.6h-1.6zM301.2 358.2h1.6v1.6h-1.6zM301.2 370.2h1.6v1.6h-1.6zM301.2 394.2h1.6v1.6h-1.6zM301.2 406.2h1.6v1.6h-1.6zM301.2 418.2h1.6v1.6h-1.6zM301.2 430.2h1.6v1.6h-1.6zM301.2 454.2h1.6v1.6h-1.6zM301.2 466.2h1.6v1.6h-1.6zM301.2 478.2h1.6v1.6h-1.6zM301.2 490.2h1.6v1.6h-1.6zM301.2 514.2h1.6v1.6h-1.6zM301.2 526.2h1.6v1.6h-1.6zM301.2 538.2h1.6v1.6h-1.6zM301.2 550.2h1.6v1.6h-1.6zM301.2 574.2h1.6v1.6h-1.6zM301.2 586.2h1.6v1.6h-1.6zM301.2 598.2h1.6v1.6h-1.6zM301.2 610.2h1.6v1.6h-1.6zM361.2 34.2h1.6v1.6h-1.6zM361.2 46.2h1.6v1.6h-1.6zM361.2 58.2h1.6v1.6h-1.6zM361.2 70.2h1.6v1.6h-1.6zM361.2 94.2h1.6v1.6h-1.6zM361.2 106.2h1.6v1.6h-1.6zM361.2 118.2h1.6v1.6h-1.6zM361.2 130.2h1.6v1.6h-1.6zM361.2 154.2h1.6v1.6h-1.6zM361.2 166.2h1.6v1.6h-1.6zM361.2 178.2h1.6v1.6h-1.6zM361.2 190.2h1.6v1.6h-1.6zM361.2 214.2h1.6v1.6h-1.6zM361.2 226.2h1.6v1.6h-1.6zM361.2 238.2h1.6v1.6h-1.6zM361.2 250.2h1.6v1.6h-1.6zM361.2 274.2h1.6v1.6h-1.6zM361.2 286.2h1.6v1.6h-1.6zM361.2 298.2h1.6v1.6h-1.6zM361.2 310.2h1.6v1.6h-1.6zM361.2 334.2h1.6v1.6h-1.6zM361.2 346.2h1.6v1.6h-1.6zM361.2 358.2h1.6v1.6h-1.6zM361.2 370.2h1.6v1.6h-1.6zM361.2 394.2h1.6v1.6h-1.6zM361.2 406.2h1.6v1.6h-1.6zM361.2 418.2h1.6v1.6h-1.6zM361.2 430.2h1.6v1.6h-1.6zM361.2 454.2h1.6v1.6h-1.6zM361.2 466.2h1.6v1.6h-1.6zM361.2 478.2h1.6v1.6h-1.6zM361.2 490.2h1.6v1.6h-1.6zM361.2 514.2h1.6v1.6h-1.6zM361.2 526.2h1.6v1.6h-1.6zM361.2 538.2h1.6v1.6h-1.6zM361.2 550.2h1.6v1.6h-1.6zM361.2 574.2h1.6v1.6h-1.6zM361.2 586.2h1.6v1.6h-1.6zM361.2 598.2h1.6v1.6h-1.6zM361.2 610.2h1.6v1.6h-1.6zM421.2 34.2h1.6v1.6h-1.6zM421.2 46.2h1.6v1.6h-1.6zM421.2 58.2h1.6v1.6h-1.6zM421.2 70.2h1.6v1.6h-1.6zM421.2 94.2h1.6v1.6h-1.6zM421.2 106.2h1.6v1.6h-1.6zM421.2 118.2h1.6v1.6h-1.6zM421.2 130.2h1.6v1.6h-1.6zM421.2 154.2h1.6v1.6h-1.6zM421.2 166.2h1.6v1.6h-1.6zM421.2 178.2h1.6v1.6h-1.6zM421.2 190.2h1.6v1.6h-1.6zM421.2 214.2h1.6v1.6h-1.6zM421.2 226.2h1.6v1.6h-1.6zM421.2 238.2h1.6v1.6h-1.6zM421.2 250.2h1.6v1.6h-1.6zM421.2 274.2h1.6v1.6h-1.6zM421.2 286.2h1.6v1.6h-1.6zM421.2 298.2h1.6v1.6h-1.6zM421.2 310.2h1.6v1.6h-1.6zM421.2 334.2h1.6v1.6h-1.6zM421.2 346.2h1.6v1.6h-1.6zM421.2 358.2h1.6v1.6h-1.6zM421.2 370.2h1.6v1.6h-1.6zM421.2 394.2h1.6v1.6h-1.6zM421.2 406.2h1.6v1.6h-1.6zM421.2 418.2h1.6v1.6h-1.6zM421.2 430.2h1.6v1.6h-1.6zM421.2 454.2h1.6v1.6h-1.6zM421.2 466.2h1.6v1.6h-1.6zM421.2 478.2h1.6v1.6h-1.6zM421.2 490.2h1.6v1.6h-1.6zM421.2 514.2h1.6v1.6h-1.6zM421.2 526.2h1.6v1.6h-1.6zM421.2 538.2h1.6v1.6h-1.6zM421.2 550.2h1.6v1.6h-1.6zM421.2 574.2h1.6v1.6h-1.6zM421.2 586.2h1.6v1.6h-1.6zM421.2 598.2h1.6v1.6h-1.6zM421.2 610.2h1.6v1.6h-1.6zM541.2 34.2h1.6v1.6h-1.6zM541.2 46.2h1.6v1.6h-1.6zM541.2 58.2h1.6v1.6h-1.6zM541.2 70.2h1.6v1.6h-1.6zM541.2 94.2h1.6v1.6h-1.6zM541.2 106.2h1.6v1.6h-1.6zM541.2 118.2h1.6v1.6h-1.6zM541.2 130.2h1.6v1.6h-1.6zM541.2 154.2h1.6v1.6h-1.6zM541.2 166.2h1.6v1.6h-1.6zM541.2 178.2h1.6v1.6h-1.6zM541.2 190.2h1.6v1.6h-1.6zM541.2 214.2h1.6v1.6h-1.6zM541.2 226.2h1.6v1.6h-1.6zM541.2 238.2h1.6v1.6h-1.6zM541.2 250.2h1.6v1.6h-1.6zM541.2 274.2h1.6v1.6h-1.6zM541.2 286.2h1.6v1.6h-1.6zM541.2 298.2h1.6v1.6h-1.6zM541.2 310.2h1.6v1.6h-1.6zM541.2 334.2h1.6v1.6h-1.6zM541.2 346.2h1.6v1.6h-1.6zM541.2 358.2h1.6v1.6h-1.6zM541.2 370.2h1.6v1.6h-1.6zM541.2 394.2h1.6v1.6h-1.6zM541.2 406.2h1.6v1.6h-1.6zM541.2 418.2h1.6v1.6h-1.6zM541.2 430.2h1.6v1.6h-1.6zM541.2 454.2h1.6v1.6h-1.6zM541.2 466.2h1.6v1.6h-1.6zM541.2 478.2h1.6v1.6h-1.6zM541.2 490.2h1.6v1.6h-1.6zM541.2 514.2h1.6v1.6h-1.6zM541.2 526.2h1.6v1.6h-1.6zM541.2 538.2h1.6v1.6h-1.6zM541.2 550.2h1.6v1.6h-1.6zM541.2 574.2h1.6v1.6h-1.6zM541.2 586.2h1.6v1.6h-1.6zM541.2 598.2h1.6v1.6h-1.6zM541.2 610.2h1.6v1.6h-1.6zM601.2 34.2h1.6v1.6h-1.6zM601.2 46.2h1.6v1.6h-1.6zM601.2 58.2h1.6v1.6h-1.6zM601.2 70.2h1.6v1.6h-1.6zM601.2 94.2h1.6v1.6h-1.6zM601.2 106.2h1.6v1.6h-1.6zM601.2 118.2h1.6v1.6h-1.6zM601.2 130.2h1.6v1.6h-1.6zM601.2 154.2h1.6v1.6h-1.6zM601.2 166.2h1.6v1.6h-1.6zM601.2 178.2h1.6v1.6h-1.6zM601.2 190.2h1.6v1.6h-1.6zM601.2 214.2h1.6v1.6h-1.6zM601.2 226.2h1.6v1.6h-1.6zM601.2 238.2h1.6v1.6h-1.6zM601.2 250.2h1.6v1.6h-1.6zM601.2 274.2h1.6v1.6h-1.6zM601.2 286.2h1.6v1.6h-1.6zM601.2 298.2h1.6v1.6h-1.6zM601.2 310.2h1.6v1.6h-1.6zM601.2 334.2h1.6v1.6h-1.6zM601.2 346.2h1.6v1.6h-1.6zM601.2 358.2h1.6v1.6h-1.6zM601.2 370.2h1.6v1.6h-1.6zM601.2 394.2h1.6v1.6h-1.6zM601.2 406.2h1.6v1.6h-1.6zM601.2 418.2h1.6v1.6h-1.6zM601.2 430.2h1.6v1.6h-1.6zM601.2 454.2h1.6v1.6h-1.6zM601.2 466.2h1.6v1.6h-1.6zM601.2 478.2h1.6v1.6h-1.6zM601.2 490.2h1.6v1.6h-1.6zM601.2 514.2h1.6v1.6h-1.6zM601.2 526.2h1.6v1.6h-1.6zM601.2 538.2h1.6v1.6h-1.6zM601.2 550.2h1.6v1.6h-1.6zM601.2 574.2h1.6v1.6h-1.6zM601.2 586.2h1.6v1.6h-1.6zM601.2 598.2h1.6v1.6h-1.6zM601.2 610.2h1.6v1.6h-1.6zM661.2 34.2h1.6v1.6h-1.6zM661.2 46.2h1.6v1.6h-1.6zM661.2 58.2h1.6v1.6h-1.6zM661.2 70.2h1.6v1.6h-1.6zM661.2 94.2h1.6v1.6h-1.6zM661.2 106.2h1.6v1.6h-1.6zM661.2 118.2h1.6v1.6h-1.6zM661.2 130.2h1.6v1.6h-1.6zM661.2 154.2h1.6v1.6h-1.6zM661.2 166.2h1.6v1.6h-1.6zM661.2 178.2h1.6v1.6h-1.6zM661.2 190.2h1.6v1.6h-1.6zM661.2 214.2h1.6v1.6h-1.6zM661.2 226.2h1.6v1.6h-1.6zM661.2 238.2h1.6v1.6h-1.6zM661.2 250.2h1.6v1.6h-1.6zM661.2 274.2h1.6v1.6h-1.6zM661.2 286.2h1.6v1.6h-1.6zM661.2 298.2h1.6v1.6h-1.6zM661.2 310.2h1.6v1.6h-1.6zM661.2 334.2h1.6v1.6h-1.6zM661.2 346.2h1.6v1.6h-1.6zM661.2 358.2h1.6v1.6h-1.6zM661.2 370.2h1.6v1.6h-1.6zM661.2 394.2h1.6v1.6h-1.6zM661.2 406.2h1.6v1.6h-1.6zM661.2 418.2h1.6v1.6h-1.6zM661.2 430.2h1.6v1.6h-1.6zM661.2 454.2h1.6v1.6h-1.6zM661.2 466.2h1.6v1.6h-1.6zM661.2 478.2h1.6v1.6h-1.6zM661.2 490.2h1.6v1.6h-1.6zM661.2 514.2h1.6v1.6h-1.6zM661.2 526.2h1.6v1.6h-1.6zM661.2 538.2h1.6v1.6h-1.6zM661.2 550.2h1.6v1.6h-1.6zM661.2 574.2h1.6v1.6h-1.6zM661.2 586.2h1.6v1.6h-1.6zM661.2 598.2h1.6v1.6h-1.6zM661.2 610.2h1.6v1.6h-1.6zM721.2 34.2h1.6v1.6h-1.6zM721.2 46.2h1.6v1.6h-1.6zM721.2 58.2h1.6v1.6h-1.6zM721.2 70.2h1.6v1.6h-1.6zM721.2 94.2h1.6v1.6h-1.6zM721.2 106.2h1.6v1.6h-1.6zM721.2 118.2h1.6v1.6h-1.6zM721.2 130.2h1.6v1.6h-1.6zM721.2 154.2h1.6v1.6h-1.6zM721.2 166.2h1.6v1.6h-1.6zM721.2 178.2h1.6v1.6h-1.6zM721.2 190.2h1.6v1.6h-1.6zM721.2 214.2h1.6v1.6h-1.6zM721.2 226.2h1.6v1.6h-1.6zM721.2 238.2h1.6v1.6h-1.6zM721.2 250.2h1.6v1.6h-1.6zM721.2 274.2h1.6v1.6h-1.6zM721.2 286.2h1.6v1.6h-1.6zM721.2 298.2h1.6v1.6h-1.6zM721.2 310.2h1.6v1.6h-1.6zM721.2 334.2h1.6v1.6h-1.6zM721.2 346.2h1.6v1.6h-1.6zM721.2 358.2h1.6v1.6h-1.6zM721.2 370.2h1.6v1.6h-1.6zM721.2 394.2h1.6v1.6h-1.6zM721.2 406.2h1.6v1.6h-1.6zM721.2 418.2h1.6v1.6h-1.6zM721.2 430.2h1.6v1.6h-1.6zM721.2 454.2h1.6v1.6h-1.6zM721.2 466.2h1.6v1.6h-1.6zM721.2 478.2h1.6v1.6h-1.6zM721.2 490.2h1.6v1.6h-1.6zM721.2 514.2h1.6v1.6h-1.6zM721.2 526.2h1.6v1.6h-1.6zM721.2 538.2h1.6v1.6h-1.6zM721.2 550.2h1.6v1.6h-1.6zM721.2 574.2h1.6v1.6h-1.6zM721.2 586.2h1.6v1.6h-1.6zM721.2 598.2h1.6v1.6h-1.6zM721.2 610.2h1.6v1.6h-1.6zM781.2 34.2h1.6v1.6h-1.6zM781.2 46.2h1.6v1.6h-1.6zM781.2 58.2h1.6v1.6h-1.6zM781.2 70.2h1.6v1.6h-1.6zM781.2 94.2h1.6v1.6h-1.6zM781.2 106.2h1.6v1.6h-1.6zM781.2 118.2h1.6v1.6h-1.6zM781.2 130.2h1.6v1.6h-1.6zM781.2 154.2h1.6v1.6h-1.6zM781.2 166.2h1.6v1.6h-1.6zM781.2 178.2h1.6v1.6h-1.6zM781.2 190.2h1.6v1.6h-1.6zM781.2 214.2h1.6v1.6h-1.6zM781.2 226.2h1.6v1.6h-1.6zM781.2 238.2h1.6v1.6h-1.6zM781.2 250.2h1.6v1.6h-1.6zM781.2 274.2h1.6v1.6h-1.6zM781.2 286.2h1.6v1.6h-1.6zM781.2 298.2h1.6v1.6h-1.6zM781.2 310.2h1.6v1.6h-1.6zM781.2 334.2h1.6v1.6h-1.6zM781.2 346.2h1.6v1.6h-1.6zM781.2 358.2h1.6v1.6h-1.6zM781.2 370.2h1.6v1.6h-1.6zM781.2 394.2h1.6v1.6h-1.6zM781.2 406.2h1.6v1.6h-1.6zM781.2 418.2h1.6v1.6h-1.6zM781.2 430.2h1.6v1.6h-1.6zM781.2 454.2h1.6v1.6h-1.6zM781.2 466.2h1.6v1.6h-1.6zM781.2 478.2h1.6v1.6h-1.6zM781.2 490.2h1.6v1.6h-1.6zM781.2 514.2h1.6v1.6h-1.6zM781.2 526.2h1.6v1.6h-1.6zM781.2 538.2h1.6v1.6h-1.6zM781.2 550.2h1.6v1.6h-1.6zM781.2 574.2h1.6v1.6h-1.6zM781.2 586.2h1.6v1.6h-1.6zM781.2 598.2h1.6v1.6h-1.6zM781.2 610.2h1.6v1.6h-1.6zM841.2 34.2h1.6v1.6h-1.6zM841.2 46.2h1.6v1.6h-1.6zM841.2 58.2h1.6v1.6h-1.6zM841.2 70.2h1.6v1.6h-1.6zM841.2 94.2h1.6v1.6h-1.6zM841.2 106.2h1.6v1.6h-1.6zM841.2 118.2h1.6v1.6h-1.6zM841.2 130.2h1.6v1.6h-1.6zM841.2 154.2h1.6v1.6h-1.6zM841.2 166.2h1.6v1.6h-1.6zM841.2 178.2h1.6v1.6h-1.6zM841.2 190.2h1.6v1.6h-1.6zM841.2 214.2h1.6v1.6h-1.6zM841.2 226.2h1.6v1.6h-1.6zM841.2 238.2h1.6v1.6h-1.6zM841.2 250.2h1.6v1.6h-1.6zM841.2 274.2h1.6v1.6h-1.6zM841.2 286.2h1.6v1.6h-1.6zM841.2 298.2h1.6v1.6h-1.6zM841.2 310.2h1.6v1.6h-1.6zM841.2 334.2h1.6v1.6h-1.6zM841.2 346.2h1.6v1.6h-1.6zM841.2 358.2h1.6v1.6h-1.6zM841.2 370.2h1.6v1.6h-1.6zM841.2 394.2h1.6v1.6h-1.6zM841.2 406.2h1.6v1.6h-1.6zM841.2 418.2h1.6v1.6h-1.6zM841.2 430.2h1.6v1.6h-1.6zM841.2 454.2h1.6v1.6h-1.6zM841.2 466.2h1.6v1.6h-1.6zM841.2 478.2h1.6v1.6h-1.6zM841.2 490.2h1.6v1.6h-1.6zM841.2 514.2h1.6v1.6h-1.6zM841.2 526.2h1.6v1.6h-1.6zM841.2 538.2h1.6v1.6h-1.6zM841.2 550.2h1.6v1.6h-1.6zM841.2 574.2h1.6v1.6h-1.6zM841.2 586.2h1.6v1.6h-1.6zM841.2 598.2h1.6v1.6h-1.6zM841.2 610.2h1.6v1.6h-1.6zM901.2 34.2h1.6v1.6h-1.6zM901.2 46.2h1.6v1.6h-1.6zM901.2 58.2h1.6v1.6h-1.6zM901.2 70.2h1.6v1.6h-1.6zM901.2 94.2h1.6v1.6h-1.6zM901.2 106.2h1.6v1.6h-1.6zM901.2 118.2h1.6v1.6h-1.6zM901.2 130.2h1.6v1.6h-1.6zM901.2 154.2h1.6v1.6h-1.6zM901.2 166.2h1.6v1.6h-1.6zM901.2 178.2h1.6v1.6h-1.6zM901.2 190.2h1.6v1.6h-1.6zM901.2 214.2h1.6v1.6h-1.6zM901.2 226.2h1.6v1.6h-1.6zM901.2 238.2h1.6v1.6h-1.6zM901.2 250.2h1.6v1.6h-1.6zM901.2 274.2h1.6v1.6h-1.6zM901.2 286.2h1.6v1.6h-1.6zM901.2 298.2h1.6v1.6h-1.6zM901.2 310.2h1.6v1.6h-1.6zM901.2 334.2h1.6v1.6h-1.6zM901.2 346.2h1.6v1.6h-1.6zM901.2 358.2h1.6v1.6h-1.6zM901.2 370.2h1.6v1.6h-1.6zM901.2 394.2h1.6v1.6h-1.6zM901.2 406.2h1.6v1.6h-1.6zM901.2 418.2h1.6v1.6h-1.6zM901.2 430.2h1.6v1.6h-1.6zM901.2 454.2h1.6v1.6h-1.6zM901.2 466.2h1.6v1.6h-1.6zM901.2 478.2h1.6v1.6h-1.6zM901.2 490.2h1.6v1.6h-1.6zM901.2 514.2h1.6v1.6h-1.6zM901.2 526.2h1.6v1.6h-1.6zM901.2 538.2h1.6v1.6h-1.6zM901.2 550.2h1.6v1.6h-1.6zM901.2 574.2h1.6v1.6h-1.6zM901.2 586.2h1.6v1.6h-1.6zM901.2 598.2h1.6v1.6h-1.6zM901.2 610.2h1.6v1.6h-1.6z" fill="#909090"/>
<path d="M37.25 321h1.5v4h-1.5zM49.25 321h1.5v4h-1.5zM61.25 321h1.5v4h-1.5zM73.25 321h1.5v4h-1.5zM85.25 321h1.5v4h-1.5zM97.25 321h1.5v4h-1.5zM109.25 321h1.5v4h-1.5zM121.25 321h1.5v4h-1.5zM133.25 321h1.5v4h-1.5zM145.25 321h1.5v4h-1.5zM157.25 321h1.5v4h-1.5zM169.25 321h1.5v4h-1.5zM181.25 321h1.5v4h-1.5zM193.25 321h1.5v4h-1.5zM205.25 321h1.5v4h-1.5zM217.25 321h1.5v4h-1.5zM229.25 321h1.5v4h-1.5zM241.25 321h1.5v4h-1.5zM253.25 321h1.5v4h-1.5zM265.25 321h1.5v4h-1.5zM277.25 321h1.5v4h-1.5zM289.25 321h1.5v4h-1.5zM301.25 321h1.5v4h-1.5zM313.25 321h1.5v4h-1.5zM325.25 321h1.5v4h-1.5zM337.25 321h1.5v4h-1.5zM349.25 321h1.5v4h-1.5zM361.25 321h1.5v4h-1.5zM373.25 321h1.5v4h-1.5zM385.25 321h1.5v4h-1.5zM397.25 321h1.5v4h-1.5zM409.25 321h1.5v4h-1.5zM421.25 321h1.5v4h-1.5zM433.25 321h1.5v4h-1.5zM445.25 321h1.5v4h-1.5zM457.25 321h1.5v4h-1.5zM469.25 321h1.5v4h-1.5zM481.25 321h1.5v4h-1.5zM493.25 321h1.5v4h-1.5zM505.25 321h1.5v4h-1.5zM517.25 321h1.5v4h-1.5zM529.25 321h1.5v4h-1.5zM541.25 321h1.5v4h-1.5zM553.25 321h1.5v4h-1.5zM565.25 321h1.5v4h-1.5zM577.25 321h1.5v4h-1.5zM589.25 321h1.5v4h-1.5zM601.25 321h1.5v4h-1.5zM613.25 321h1.5v4h-1.5zM625.25 321h1.5v4h-1.5zM637.25 321h1.5v4h-1.5zM649.25 321h1.5v4h-1.5zM661.25 321h1.5v4h-1.5zM673.25 321h1.5v4h-1.5zM685.25 321h1.5v4h-1.5zM697.25 321h1.5v4h-1.5zM709.25 321h1.5v4h-1.5zM721.25 321h1.5v4h-1.5zM733.25 321h1.5v4h-1.5zM745.25 321h1.5v4h-1.5zM757.25 321h1.5v4h-1.5zM769.25 321h1.5v4h-1.5zM781.25 321h1.5v4h-1.5zM793.25 321h1.5v4h-1.5zM805.25 321h1.5v4h-1.5zM817.25 321h1.5v4h-1.5zM829.25 321h1.5v4h-1.5zM841.25 321h1.5v4h-1.5zM853.25 321h1.5v4h-1.5zM865.25 321h1.5v4h-1.5zM877.25 321h1.5v4h-1.5zM889.25 321h1.5v4h-1.5zM901.25 321h1.5v4h-1.5zM913.25 321h1.5v4h-1.5zM925.25 321h1.5v4h-1.5zM480 34.25h4v1.5h-4zM480 46.25h4v1.5h-4zM480 58.25h4v1.5h-4zM480 70.25h4v1.5h-4zM480 82.25h4v1.5h-4zM480 94.25h4v1.5h-4zM480 106.25h4v1.5h-4zM480 118.25h4v1.5h-4zM480 130.25h4v1.5h-4zM480 142.25h4v1.5h-4zM480 154.25h4v1.5h-4zM480 166.25h4v1.5h-4zM480 178.25h4v1.5h-4zM480 190.25h4v1.5h-4zM480 202.25h4v1.5h-4zM480 214.25h4v1.5h-4zM480 226.25h4v1.5h-4zM480 238.25h4v1.5h-4zM480 250.25h4v1.5h-4zM480 262.25h4v1.5h-4zM480 274.25h4v1.5h-4zM480 286.25h4v1.5h-4zM480 298.25h4v1.5h-4zM480 310.25h4v1.5h-4zM480 322.25h4v1.5h-4zM480 334.25h4v1.5h-4zM480 346.25h4v1.5h-4zM480 358.25h4v1.5h-4zM480 370.25h4v1.5h-4zM480 382.25h4v1.5h-4zM480 394.25h4v1.5h-4zM480 406.25h4v1.5h-4zM480 418.25h4v1.5h-4zM480 430.25h4v1.5h-4zM480 442.25h4v1.5h-4zM480 454.25h4v1.5h-4zM480 466.25h4v1.5h-4zM480 478.25h4v1.5h-4zM480 490.25h4v1.5h-4zM480 502.25h4v1.5h-4zM480 514.25h4v1.5h-4zM480 526.25h4v1.5h-4zM480 538.25h4v1.5h-4zM480 550.25h4v1.5h-4zM480 562.25h4v1.5h-4zM480 574.25h4v1.5h-4zM480 586.25h4v1.5h-4zM480 598.25h4v1.5h-4zM480 610.25h4v1.5h-4z" fill="#f4f4f4"/>
<path d="M37.25 25h1.5v3h-1.5zM37.25 618h1.5v3h-1.5zM49.25 25h1.5v3h-1.5zM49.25 618h1.5v3h-1.5zM61.25 25h1.5v6h-1.5zM61.25 615h1.5v6h-1.5zM73.25 25h1.5v3h-1.5zM73.25 618h1.5v3h-1.5zM85.25 25h1.5v3h-1.5zM85.25 618h1.5v3h-1.5zM97.25 25h1.5v3h-1.5zM97.25 618h1.5v3h-1.5zM109.25 25h1.5v3h-1.5zM109.25 618h1.5v3h-1.5zM121.25 25h1.5v6h-1.5zM121.25 615h1.5v6h-1.5zM133.25 25h1.5v3h-1.5zM133.25 618h1.5v3h-1.5zM145.25 25h1.5v3h-1.5zM145.25 618h1.5v3h-1.5zM157.25 25h1.5v3h-1.5zM157.25 618h1.5v3h-1.5zM169.25 25h1.5v3h-1.5zM169.25 618h1.5v3h-1.5zM181.25 25h1.5v6h-1.5zM181.25 615h1.5v6h-1.5zM193.25 25h1.5v3h-1.5zM193.25 618h1.5v3h-1.5zM205.25 25h1.5v3h-1.5zM205.25 618h1.5v3h-1.5zM217.25 25h1.5v3h-1.5zM217.25 618h1.5v3h-1.5zM229.25 25h1.5v3h-1.5zM229.25 618h1.5v3h-1.5zM241.25 25h1.5v6h-1.5zM241.25 615h1.5v6h-1.5zM253.25 25h1.5v3h-1.5zM253.25 618h1.5v3h-1.5zM265.25 25h1.5v3h-1.5zM265.25 618h1.5v3h-1.5zM277.25 25h1.5v3h-1.5zM277.25 618h1.5v3h-1.5zM289.25 25h1.5v3h-1.5zM289.25 618h1.5v3h-1.5zM301.25 25h1.5v6h-1.5zM301.25 615h1.5v6h-1.5zM313.25 25h1.5v3h-1.5zM313.25 618h1.5v3h-1.5zM325.25 25h1.5v3h-1.5zM325.25 618h1.5v3h-1.5zM337.25 25h1.5v3h-1.5zM337.25 618h1.5v3h-1.5zM349.25 25h1.5v3h-1.5zM349.25 618h1.5v3h-1.5zM361.25 25h1.5v6h-1.5zM361.25 615h1.5v6h-1.5zM373.25 25h1.5v3h-1.5zM373.25 618h1.5v3h-1.5zM385.25 25h1.5v3h-1.5zM385.25 618h1.5v3h-1.5zM397.25 25h1.5v3h-1.5zM397.25 618h1.5v3h-1.5zM409.25 25h1.5v3h-1.5zM409.25 618h1.5v3h-1.5zM421.25 25h1.5v6h-1.5zM421.25 615h1.5v6h-1.5zM433.25 25h1.5v3h-1.5zM433.25 618h1.5v3h-1.5zM445.25 25h1.5v3h-1.5zM445.25 618h1.5v3h-1.5zM457.25 25h1.5v3h-1.5zM457.25 618h1.5v3h-1.5zM469.25 25h1.5v3h-1.5zM469.25 618h1.5v3h-1.5zM481.25 25h1.5v6h-1.5zM481.25 615h1.5v6h-1.5zM493.25 25h1.5v3h-1.5zM493.25 618h1.5v3h-1.5zM505.25 25h1.5v3h-1.5zM505.25 618h1.5v3h-1.5zM517.25 25h1.5v3h-1.5zM517.25 618h1.5v3h-1.5zM529.25 25h1.5v3h-1.5zM529.25 618h1.5v3h-1.5zM541.25 25h1.5v6h-1.5zM541.25 615h1.5v6h-1.5zM553.25 25h1.5v3h-1.5zM553.25 618h1.5v3h-1.5zM565.25 25h1.5v3h-1.5zM565.25 618h1.5v3h-1.5zM577.25 25h1.5v3h-1.5zM577.25 618h1.5v3h-1.5zM589.25 25h1.5v3h-1.5zM589.25 618h1.5v3h-1.5zM601.25 25h1.5v6h-1.5zM601.25 615h1.5v6h-1.5zM613.25 25h1.5v3h-1.5zM613.25 618h1.5v3h-1.5zM625.25 25h1.5v3h-1.5zM625.25 618h1.5v3h-1.5zM637.25 25h1.5v3h-1.5zM637.25 618h1.5v3h-1.5zM649.25 25h1.5v3h-1.5zM649.25 618h1.5v3h-1.5zM661.25 25h1.5v6h-1.5zM661.25 615h1.5v6h-1.5zM673.25 25h1.5v3h-1.5zM673.25 618h1.5v3h-1.5zM685.25 25h1.5v3h-1.5zM685.25 618h1.5v3h-1.5zM697.25 25h1.5v3h-1.5zM697.25 618h1.5v3h-1.5zM709.25 25h1.5v3h-1.5zM709.25 618h1.5v3h-1.5zM721.25 25h1.5v6h-1.5zM721.25 615h1.5v6h-1.5zM733.25 25h1.5v3h-1.5zM733.25 618h1.5v3h-1.5zM745.25 25h1.5v3h-1.5zM745.25 618h1.5v3h-1.5zM757.25 25h1.5v3h-1.5zM757.25 618h1.5v3h-1.5zM769.25 25h1.5v3h-1.5zM769.25 618h1.5v3h-1.5zM781.25 25h1.5v6h-1.5zM781.25 615h1.5v6h-1.5zM793.25 25h1.5v3h-1.5zM793.25 618h1.5v3h-1.5zM805.25 25h1.5v3h-1.5zM805.25 618h1.5v3h-1.5zM817.25 25h1.5v3h-1.5zM817.25 618h1.5v3h-1.5zM829.25 25h1.5v3h-1.5zM829.25 618h1.5v3h-1.5zM841.25 25h1.5v6h-1.5zM841.25 615h1.5v6h-1.5zM853.25 25h1.5v3h-1.5zM853.25 618h1.5v3h-1.5zM865.25 25h1.5v3h-1.5zM865.25 618h1.5v3h-1.5zM877.25 25h1.5v3h-1.5zM877.25 618h1.5v3h-1.5zM889.25 25h1.5v3h-1.5zM889.25 618h1.5v3h-1.5zM901.25 25h1.5v6h-1.5zM901.25 615h1.5v6h-1.5zM913.25 25h1.5v3h-1.5zM913.25 618h1.5v3h-1.5zM925.25 25h1.5v3h-1.5zM925.25 618h1.5v3h-1.5zM26 34.25h4v1.5h-4zM930 34.25h4v1.5h-4zM26 46.25h4v1.5h-4zM930 46.25h4v1.5h-4zM26 58.25h4v1.5h-4zM930 58.25h4v1.5h-4zM26 70.25h4v1.5h-4zM930 70.25h4v1.5h-4zM26 82.25h7v1.5h-7zM927 82.25h7v1.5h-7zM26 94.25h4v1.5h-4zM930 94.25h4v1.5h-4zM26 106.25h4v1.5h-4zM930 106.25h4v1.5h-4zM26 118.25h4v1.5h-4zM930 118.25h4v1.5h-4zM26 130.25h4v1.5h-4zM930 130.25h4v1.5h-4zM26 142.25h7v1.5h-7zM927 142.25h7v1.5h-7zM26 154.25h4v1.5h-4zM930 154.25h4v1.5h-4zM26 166.25h4v1.5h-4zM930 166.25h4v1.5h-4zM26 178.25h4v1.5h-4zM930 178.25h4v1.5h-4zM26 190.25h4v1.5h-4zM930 190.25h4v1.5h-4zM26 202.25h7v1.5h-7zM927 202.25h7v1.5h-7zM26 214.25h4v1.5h-4zM930 214.25h4v1.5h-4zM26 226.25h4v1.5h-4zM930 226.25h4v1.5h-4zM26 238.25h4v1.5h-4zM930 238.25h4v1.5h-4zM26 250.25h4v1.5h-4zM930 250.25h4v1.5h-4zM26 262.25h7v1.5h-7zM927 262.25h7v1.5h-7zM26 274.25h4v1.5h-4zM930 274.25h4v1.5h-4zM26 286.25h4v1.5h-4zM930 286.25h4v1.5h-4zM26 298.25h4v1.5h-4zM930 298.25h4v1.5h-4zM26 310.25h4v1.5h-4zM930 310.25h4v1.5h-4zM26 322.25h7v1.5h-7zM927 322.25h7v1.5h-7zM26 334.25h4v1.5h-4zM930 334.25h4v1.5h-4zM26 346.25h4v1.5h-4zM930 346.25h4v1.5h-4zM26 358.25h4v1.5h-4zM930 358.25h4v1.5h-4zM26 370.25h4v1.5h-4zM930 370.25h4v1.5h-4zM26 382.25h7v1.5h-7zM927 382.25h7v1.5h-7zM26 394.25h4v1.5h-4zM930 394.25h4v1.5h-4zM26 406.25h4v1.5h-4zM930 406.25h4v1.5h-4zM26 418.25h4v1.5h-4zM930 418.25h4v1.5h-4zM26 430.25h4v1.5h-4zM930 430.25h4v1.5h-4zM26 442.25h7v1.5h-7zM927 442.25h7v1.5h-7zM26 454.25h4v1.5h-4zM930 454.25h4v1.5h-4zM26 466.25h4v1.5h-4zM930 466.25h4v1.5h-4zM26 478.25h4v1.5h-4zM930 478.25h4v1.5h-4zM26 490.25h4v1.5h-4zM930 490.25h4v1.5h-4zM26 502.25h7v1.5h-7zM927 502.25h7v1.5h-7zM26 514.25h4v1.5h-4zM930 514.25h4v1.5h-4zM26 526.25h4v1.5h-4zM930 526.25h4v1.5h-4zM26 538.25h4v1.5h-4zM930 538.25h4v1.5h-4zM26 550.25h4v1.5h-4zM930 550.25h4v1.5h-4zM26 562.25h7v1.5h-7zM927 562.25h7v1.5h-7zM26 574.25h4v1.5h-4zM930 574.25h4v1.5h-4zM26 586.25h4v1.5h-4zM930 586.25h4v1.5h-4zM26 598.25h4v1.5h-4zM930 598.25h4v1.5h-4zM26 610.25h4v1.5h-4zM930 610.25h4v1.5h-4z" fill="#f4f4f4"/>
<path d="M26 322.0V325.0M27 322.0V327.3M28 319.9V325.0M29 322.0V325.0M30 320.0V325.0M31 320.1V325.0M32 320.8V325.0M33 322.0V325.0M34 322.0V325.0M35 322.0V326.4M36 322.0V325.0M37 322.0V325.0M38 322.0V325.0M39 322.0V325.0M40 322.0V325.0M41 319.3V325.0M42 322.0V325.0M43 322.0V326.2M44 322.0V325.0M45 322.0V325.0M46 322.0V327.2M47 322.0V325.0M48 322.0V325.0M49 322.0V325.0M50 320.9V325.0M51 322.0V327.4M52 322.0V325.0M53 322.0V325.0M54 322.0V325.0M55 322.0V325.0M56 322.0V325.0M57 322.0V325.0M58 322.0V325.0M59 322.0V325.0M60 322.0V325.0M61 322.0V325.0M62 322.0V325.0M63 322.0V325.0M64 322.0V325.0M65 322.0V325.0M66 320.2V325.0M67 322.0V325.0M68 322.0V327.0M69 319.7V325.0M70 322.0V325.0M71 322.0V325.0M72 322.0V325.0M73 322.0V325.0M74 322.0V325.0M75 322.0V325.0M76 322.0V325.0M77 322.0V325.0M78 322.0V325.0M79 322.0V325.0M80 322.0V325.0M81 322.0V325.0M82 319.6V325.0M83 322.0V325.0M84 322.0V325.0M85 322.0V325.0M86 322.0V325.0M87 322.0V325.0M88 322.0V325.0M89 320.1V325.0M90 322.0V326.2M91 319.5V325.0M92 322.0V326.5M93 322.0V325.0M94 322.0V325.0M95 320.1V325.0M96 322.0V325.0M97 322.0V325.0M98 322.0V325.0M99 322.0V325.0M100 322.0V325.0M101 322.0V325.0M102 322.0V325.0M103 322.0V325.0M104 322.0V325.0M105 322.0V326.4M106 322.0V325.0M107 322.0V325.0M108 322.0V325.0M109 322.0V325.0M110 322.0V325.0M111 320.2V325.0M112 322.0V325.0M113 322.0V325.0M114 322.0V325.0M115 322.0V325.0M116 322.0V325.0M117 322.0V325.0M118 322.0V325.0M119 319.2V325.0M120 322.0V325.0M121 322.0V325.0M122 322.0V325.0M123 322.0V325.0M124 322.0V325.0M125 319.7V325.0M126 320.9V325.0M127 322.0V326.3M128 322.0V325.0M129 321.0V325.0M130 322.0V326.2M131 322.0V325.0M132 319.3V325.0M133 322.0V325.0M134 322.0V326.5M135 322.0V325.0M136 322.0V325.0M137 322.0V327.7M138 322.0V325.0M139 322.0V325.0M140 322.0V325.0M141 320.8V325.0M142 322.0V325.0M143 322.0V325.0M144 322.0V325.0M145 322.0V326.0M146 322.0V325.0M147 322.0V325.0M148 322.0V327.1M149 319.9V325.0M150 322.0V325.0M151 322.0V325.0M152 322.0V325.0M153 322.0V325.0M154 322.0V325.0M155 322.0V327.5M156 322.0V325.0M157 322.0V325.0M158 322.0V325.0M159 322.0V325.0M160 322.0V325.0M161 322.0V325.0M162 322.0V325.0M163 322.0V325.0M164 322.0V325.0M165 322.0V325.0M166 322.0V325.0M167 322.0V325.0M168 322.0V325.0M169 320.9V325.0M170 322.0V325.0M171 322.0V325.0M172 322.0V325.0M173 322.0V325.0M174 322.0V325.0M175 322.0V325.0M176 322.0V325.0M177 322.0V325.0M178 322.0V325.0M179 322.0V325.0M180 322.0V325.0M181 322.0V326.4M182 322.0V325.0M183 322.0V325.0M184 322.0V325.0M185 322.0V325.0M186 322.0V325.0M187 322.0V325.0M188 319.7V325.0M189 322.0V325.0M190 322.0V325.0M191 322.0V325.0M192 322.0V325.0M193 322.0V327.6M194 322.0V325.0M195 322.0V325.0M196 322.0V325.0M197 322.0V325.0M198 322.0V325.0M199 322.0V325.0M200 322.0V325.0M201 322.0V326.3M202 322.0V327.8M203 322.0V325.0M204 322.0V327.7M205 322.0V325.0M206 322.0V325.0M207 322.0V325.0M208 322.0V325.0M209 306.2V324.5M210 298.4V308.2M211 292.0V300.4M212 288.8V294.0M213 285.6V290.8M214 282.9V287.6M215 280.7V284.9M216 278.4V282.7M217 275.7V280.4M218 272.8V277.7M219 269.9V274.8M220 267.0V271.9M221 264.0V269.0M222 261.0V266.0M223 258.0V263.0M224 255.3V260.0M225 252.8V257.3M226 250.2V254.8M227 247.7V252.2M228 246.0V249.7M229 244.4V248.0M230 240.5V246.4M231 236.6V246.1M232 237.9V246.7M233 237.8V246.0M234 235.7V242.8M235 237.5V242.7M236 237.0V243.3M237 237.0V242.7M238 237.5V244.6M239 236.6V242.8M240 235.7V244.6M241 236.3V244.7M242 228.0V260.0M243 230.1V241.9M244 229.5V242.2M245 229.5V243.3M246 228.3V242.5M247 226.4V242.6M248 226.3V242.4M249 225.8V242.9M250 226.7V242.3M251 226.4V241.7M252 225.3V242.0M253 225.6V242.4M254 224.9V241.7M255 225.5V241.7M256 225.6V242.0M257 225.7V241.6M258 225.6V242.3M259 225.1V242.1M260 224.6V240.7M261 225.3V242.0M262 224.7V240.3M263 227.5V242.3M264 226.9V240.5M265 225.0V238.5M266 223.3V238.0M267 226.2V239.4M268 226.3V239.3M269 224.8V239.1M270 224.3V236.2M271 224.0V235.5M272 224.5V238.5M273 226.9V238.8M274 224.7V236.9M275 223.7V234.8M276 223.0V234.8M277 225.1V238.1M278 226.6V238.5M279 223.7V236.8M280 223.4V236.0M281 222.7V237.1M282 225.7V238.1M283 225.9V239.2M284 223.6V235.6M285 222.2V235.8M286 222.4V236.1M287 225.3V239.6M288 224.1V238.8M289 203.0V235.1M290 215.0V231.0M291 212.2V231.0M292 214.0V241.0M293 212.3V230.9M294 214.9V230.9M295 214.8V230.9M296 213.2V231.2M297 214.6V231.8M298 214.7V230.8M299 214.7V230.8M300 213.0V233.0M301 212.4V230.8M302 213.2V230.7M303 212.1V230.7M304 214.5V230.7M305 214.5V230.7M306 214.4V230.7M307 214.4V230.6M308 214.4V230.6M309 214.3V230.6M310 213.9V232.8M311 214.3V230.8M312 214.2V230.5M313 214.2V230.5M314 213.3V230.5M315 212.8V230.5M316 214.1V230.4M317 214.1V233.3M318 214.0V230.4M319 212.8V230.4M320 214.0V240.0M321 213.1V231.5M322 213.8V230.3M323 212.1V230.3M324 213.8V230.3M325 213.8V230.2M326 213.7V230.2M327 213.7V232.4M328 213.7V232.7M329 213.6V230.2M330 213.6V230.1M331 212.0V230.1M332 213.5V230.1M333 213.5V230.1M334 213.5V230.0M335 213.4V230.1M336 212.3V232.5M337 213.4V230.0M338 213.3V230.0M339 213.3V232.3M340 213.3V229.9M341 213.2V229.9M342 211.0V229.9M343 212.4V229.8M344 210.9V229.8M345 213.1V229.8M346 213.1V229.8M347 213.0V229.8M348 213.0V230.2M349 212.9V229.7M350 212.0V231.0M351 212.7V229.7M352 212.8V229.7M353 212.8V229.6M354 212.8V229.6M355 212.7V232.3M356 209.8V229.6M357 211.3V229.5M358 212.6V229.5M359 212.6V232.3M360 210.8V231.1M361 212.5V231.9M362 212.5V229.4M363 212.5V232.1M364 212.4V229.4M365 212.4V229.4M366 212.4V230.4M367 212.3V229.3M368 210.0V229.3M369 209.5V229.3M370 212.2V229.3M371 212.2V229.2M372 212.1V229.2M373 212.1V229.2M374 212.1V229.5M375 212.0V229.2M376 212.0V229.9M377 212.0V230.2M378 211.9V229.1M379 211.9V229.1M380 211.9V229.0M381 211.8V229.0M382 209.6V229.0M383 211.8V229.0M384 211.7V231.7M385 210.3V228.9M386 211.7V228.9M387 211.6V228.9M388 211.6V228.9M389 211.6V228.8M390 211.0V231.5M391 203.0V231.5M392 211.5V228.8M393 210.8V229.8M394 210.7V228.7M395 211.3V228.7M396 211.3V228.7M397 211.3V228.7M398 211.2V228.7M399 210.4V228.6M400 209.7V228.6M401 211.1V229.4M402 209.9V228.6M403 211.1V228.5M404 211.0V228.6M405 211.0V228.5M406 211.0V228.4M407 209.8V228.3M408 210.9V228.2M409 210.9V228.5M410 209.3V228.1M411 210.8V228.0M412 210.8V227.9M413 210.7V227.8M414 208.4V230.5M415 210.7V227.7M416 209.9V227.6M417 210.6V227.7M418 210.6V227.4M419 210.5V229.1M420 209.6V227.2M421 210.5V227.2M422 210.4V227.1M423 209.7V227.0M424 210.4V226.9M425 208.8V226.8M426 210.3V226.8M427 210.3V226.7M428 210.1V226.6M429 210.2V226.5M430 207.8V226.4M431 210.1V229.2M432 210.1V226.2M433 209.4V226.2M434 200.0V226.1M435 210.0V226.7M436 209.3V218.3M437 210.7V222.7M438 213.3V224.2M439 211.3V218.6M440 216.8V227.0M441 215.1V224.6M442 217.4V224.1M443 215.9V225.1M444 205.0V225.0M445 213.2V218.3M446 211.0V222.8M447 211.9V219.1M448 215.2V221.2M449 212.0V222.8M450 212.4V223.8M451 213.6V221.3M452 217.6V224.5M453 218.7V227.5M454 219.7V226.5M455 220.7V226.9M456 222.0V227.4M457 223.6V228.8M458 225.2V230.4M459 226.8V232.0M460 228.4V233.8M461 230.2V235.8M462 232.2V237.8M463 234.2V239.8M464 236.2V241.8M465 238.2V243.8M466 240.2V245.8M467 242.2V247.2M468 243.6V248.0M469 244.4V248.8M470 245.2V249.6M471 246.0V253.2M472 246.8V250.9M473 247.3V251.0M474 245.4V251.1M475 247.5V251.2M476 247.6V251.4M477 247.8V251.5M478 245.9V251.6M479 248.0V251.7M480 248.1V254.2M481 248.1V251.8M482 248.0V251.7M483 247.9V251.6M484 246.2V251.6M485 247.8V251.5M486 245.2V251.4M487 246.5V251.3M488 247.3V251.2M489 247.0V253.6M490 246.7V250.6M491 245.2V250.3M492 246.1V250.0M493 245.8V249.7M494 245.5V249.4M495 243.0V249.1M496 244.9V248.8M497 244.6V248.5M498 244.3V248.2M499 244.0V247.9M500 243.7V249.2M501 243.4V247.3M502 243.1V247.0M503 242.9V246.7M504 241.1V246.5M505 242.4V248.4M506 239.2V246.0M507 241.9V245.8M508 241.7V247.8M509 241.5V245.3M510 238.6V245.1M511 241.0V244.8M512 240.8V244.6M513 239.3V244.4M514 240.3V246.3M515 240.1V243.9M516 239.9V243.7M517 239.8V243.6M518 239.6V243.4M519 239.4V246.1M520 239.3V245.3M521 237.8V242.9M522 236.8V242.7M523 238.8V242.6M524 237.0V242.4M525 238.4V242.2M526 236.9V242.1M527 238.1V241.9M528 237.9V241.7M529 236.0V241.6M530 237.7V241.4M531 237.6V241.3M532 235.1V241.2M533 237.4V241.1M534 234.4V241.0M535 237.2V242.6M536 237.1V240.8M537 237.0V240.7M538 236.9V240.6M539 236.8V240.5M540 236.8V240.4M541 236.8V240.4M542 236.7V240.4M543 236.7V240.3M544 236.7V240.3M545 236.6V240.3M546 236.6V240.2M547 236.6V240.2M548 236.5V240.2M549 236.5V240.1M550 236.5V240.1M551 236.5V240.1M552 236.4V240.1M553 236.4V240.0M554 236.4V240.0M555 236.3V240.0M556 236.3V239.9M557 236.3V239.9M558 236.2V239.9M559 236.2V239.8M560 236.2V239.8M561 236.2V239.8M562 236.2V239.8M563 236.2V239.8M564 236.2V239.8M565 236.2V239.8M566 236.2V239.8M567 236.2V239.8M568 236.2V239.8M569 236.2V239.8M570 236.2V239.8M571 236.2V239.8M572 236.2V239.8M573 236.2V239.8M574 236.2V239.8M575 236.2V239.8M576 236.2V239.8M577 236.2V239.8M578 236.2V239.8M579 236.2V239.8M580 236.2V239.8M581 236.2V239.8M582 236.2V239.8M583 236.2V239.8M584 236.2V239.8M585 236.2V239.8M586 236.2V239.8M587 236.2V239.8M588 236.2V239.8M589 236.2V239.8M590 236.2V239.8M591 236.2V239.8M592 236.2V239.8M593 236.2V239.8M594 236.2V239.8M595 236.2V239.8M596 236.2V239.8M597 236.2V239.8M598 236.2V239.8M599 236.2V239.8M600 236.2V239.8M601 236.2V239.8M602 236.2V241.6M603 237.9V243.3M604 239.7V243.3M605 239.7V243.3M606 239.7V243.3M607 239.7V243.3M608 239.7V243.3M609 239.7V243.3M610 239.7V243.3M611 239.7V243.3M612 239.7V244.3M613 240.7V245.3M614 241.7V245.3M615 241.7V245.3M616 241.7V245.3M617 241.7V245.3M618 241.7V245.3M619 241.7V245.3M620 241.7V245.3M621 241.7V246.5M622 242.8V247.6M623 244.0V247.6M624 244.0V247.6M625 244.0V247.6M626 244.0V247.6M627 244.0V247.6M628 244.0V247.6M629 244.0V247.6M630 244.0V247.6M631 244.0V247.6M632 244.0V247.6M633 244.0V247.6M634 244.0V247.6M635 244.0V247.6M636 244.0V247.6M637 244.0V247.6M638 244.0V247.6M639 244.0V247.6M640 244.0V247.6M641 244.0V247.6M642 244.0V247.6M643 244.0V247.6M644 244.0V247.6M645 244.0V247.6M646 244.0V247.6M647 244.0V247.6M648 244.0V247.6M649 244.0V247.6M650 244.0V247.6M651 244.0V247.6M652 244.0V247.6M653 244.0V247.6M654 244.0V247.6M655 244.0V247.6M656 244.0V247.6M657 244.0V247.6M658 244.0V247.6M659 244.0V247.6M660 244.0V247.6M661 244.0V247.6M662 244.0V247.6M663 244.0V247.6M664 244.0V247.6M665 244.0V247.6M666 244.0V247.6M667 244.0V247.6M668 244.0V247.6M669 244.0V247.6M670 244.0V247.6M671 244.0V247.6M672 244.0V247.6M673 244.0V247.6M674 244.0V247.6M675 244.0V247.6M676 244.0V247.6M677 244.0V247.6M678 244.0V247.6M679 244.0V247.6M680 244.0V247.6M681 244.0V247.6M682 244.0V247.6M683 244.0V247.6M684 244.0V247.6M685 244.0V247.6M686 244.0V247.6M687 244.0V247.6M688 244.0V247.6M689 244.0V247.6M690 244.0V247.6M691 244.0V247.6M692 244.0V247.6M693 244.0V247.6M694 244.0V247.6M695 244.0V247.6M696 244.0V247.6M697 244.0V247.6M698 244.0V247.6M699 244.0V247.6M700 244.0V247.6M701 244.0V247.6M702 244.0V247.6M703 244.0V247.6M704 244.0V247.6M705 244.0V249.0M706 245.3V250.3M707 246.7V250.3M708 245.9V252.3M709 245.9V250.8M710 246.7V250.3M711 246.7V250.3M712 246.7V250.3M713 246.7V250.3M714 244.8V251.6M715 245.0V251.6M716 246.7V250.3M717 246.7V250.3M718 246.7V250.3M719 246.7V250.3M720 244.9V251.7M721 246.0V250.8M722 246.7V250.3M723 246.7V250.3M724 246.7V250.3M725 246.7V250.3M726 245.4V252.1M727 244.8V251.0M728 246.7V250.3M729 246.7V250.3M730 246.7V250.3M731 246.7V250.3M732 245.3V251.5M733 245.4V251.1M734 246.7V250.3M735 246.7V250.3M736 246.7V250.3M737 246.7V250.3M738 245.8V251.8M739 244.8V251.0M740 246.7V250.3M741 246.7V250.3M742 246.7V250.3M743 246.7V250.3M744 245.5V252.4M745 244.7V251.2M746 246.7V250.3M747 246.7V250.3M748 246.7V250.3M749 246.7V250.3M750 246.0V252.7M751 244.7V251.8M752 246.7V250.3M753 246.7V250.3M754 246.7V250.3M755 246.7V250.3M756 246.1V252.7M757 245.6V252.6M758 246.7V250.3M759 246.7V250.3M760 246.7V250.3M761 246.7V250.3M762 245.3V252.4M763 246.0V252.4M764 246.7V250.3M765 246.7V250.3M766 246.7V250.3M767 246.7V251.2M768 247.5V252.0M769 248.4V252.0M770 248.4V252.0M771 248.4V252.0M772 248.4V252.0M773 248.4V253.0M774 248.4V252.0M775 248.4V252.0M776 248.4V252.0M777 248.4V253.0M778 248.4V252.0M779 248.4V252.0M780 248.4V253.7M781 248.4V252.0M782 248.4V254.2M783 248.4V253.7M784 248.4V252.1M785 248.5V252.1M786 248.5V252.1M787 248.5V252.1M788 248.5V252.1M789 248.5V252.1M790 248.5V252.1M791 248.5V252.1M792 248.5V252.1M793 248.5V253.8M794 248.5V252.1M795 248.5V252.1M796 248.5V252.1M797 248.5V252.1M798 248.5V252.1M799 248.5V253.5M800 248.5V253.5M801 249.1V253.3M802 249.7V254.7M803 249.7V253.3M804 249.7V255.1M805 249.7V255.3M806 249.7V253.3M807 249.0V324.5M808 250.0V324.5M809 322.0V325.0M810 320.9V325.0M811 322.0V325.0M812 322.0V325.0M813 322.0V326.3M814 322.0V325.0M815 322.0V327.5M816 322.0V325.0M817 322.0V328.0M818 322.0V325.0M819 319.6V326.3M820 322.0V325.0M821 322.0V326.1M822 322.0V325.0M823 322.0V325.0M824 322.0V325.0M825 322.0V325.0M826 322.0V325.0M827 322.0V325.0M828 320.2V327.8M829 322.0V325.0M830 322.0V325.0M831 322.0V325.0M832 322.0V325.0M833 320.7V325.0M834 322.0V325.0M835 322.0V327.4M836 322.0V325.0M837 319.8V325.0M838 322.0V325.0M839 322.0V327.3M840 322.0V325.0M841 322.0V325.0M842 322.0V325.0M843 322.0V325.0M844 322.0V325.0M845 322.0V325.0M846 320.1V326.8M847 322.0V325.0M848 322.0V325.0M849 322.0V327.2M850 322.0V327.5M851 322.0V325.0M852 322.0V325.0M853 322.0V325.0M854 319.8V325.0M855 320.0V325.0M856 322.0V327.2M857 322.0V325.0M858 322.0V325.0M859 320.9V325.0M860 322.0V325.0M861 322.0V326.9M862 322.0V325.0M863 322.0V325.0M864 320.7V325.0M865 322.0V325.0M866 321.0V325.0M867 322.0V325.0M868 322.0V325.0M869 322.0V325.0M870 322.0V325.0M871 322.0V325.0M872 322.0V326.4M873 320.3V325.0M874 322.0V325.0M875 322.0V326.5M876 322.0V325.0M877 322.0V325.0M878 322.0V325.0M879 322.0V325.0M880 322.0V325.0M881 322.0V325.0M882 321.0V325.0M883 322.0V327.1M884 322.0V325.0M885 322.0V325.0M886 322.0V325.0M887 322.0V327.5M888 322.0V325.0M889 322.0V325.0M890 320.2V325.0M891 320.6V325.0M892 319.8V325.0M893 320.2V325.0M894 322.0V326.3M895 322.0V325.0M896 322.0V325.0M897 322.0V325.0M898 322.0V325.0M899 322.0V325.0M900 320.5V325.0M901 322.0V325.0M902 319.7V325.0M903 322.0V325.0M904 322.0V325.0M905 319.7V327.5M906 322.0V325.0M907 322.0V325.0M908 322.0V325.0M909 320.8V325.0M910 322.0V325.0M911 320.5V325.0M912 322.0V325.0M913 322.0V325.0M914 322.0V325.0M915 322.0V325.0M916 322.0V327.1M917 322.0V325.0M918 320.2V325.0M919 322.0V325.0M920 322.0V325.0M921 322.0V326.4M922 322.0V325.0M923 320.6V325.0M924 322.0V325.0M925 322.0V325.0M926 322.0V327.5M927 319.7V326.7M928 322.0V325.0M929 322.0V325.0M930 322.0V325.0M931 322.0V325.0M932 322.0V325.0M933 322.0V326.9" stroke="#eaea10" stroke-width="1.2" fill="none"/>
<path d="M776 323.5h12M782 317.5v12" stroke="#f0f0f0" stroke-width="1.5"/>
<path d="M0.5 313h17l7 10.5l-7 10.5h-17z" fill="#000" stroke="#e0e020" stroke-width="1.5"/>
</svg>
<div class="a" style="left:3px;top:314px;color:#e8e840;font-family:'Liberation Sans',sans-serif;font-size:18px;line-height:20px;-webkit-text-stroke:0.3px #e8e840">2</div>
<div class="a" style="left:0;top:623px;width:383px;height:97px;background:#2a98d8"></div>
<div class="a" style="left:250px;top:623px;width:3px;height:50px;background:#74b8bc"></div>
<div class="a" style="left:0;top:671px;width:383px;height:2px;background:#88bcbc"></div>
<div class="a" style="left:380px;top:623px;width:3px;height:97px;background:#74b8bc"></div>
<div class="a" style="left:0;top:623px;width:1px;height:97px;background:#74b8bc"></div>
<div class="a" style="left:0;top:717px;width:383px;height:3px;background:#74b8bc"></div>
<div class="box" style="left:1px;top:624px;width:249px;height:23px"></div><div class="a" style="left:1px;top:647px;width:249px;height:1px;background:#2a3a48"></div>
<div class="box" style="left:1px;top:648px;width:249px;height:23px"></div>
<div class="box" style="left:254px;top:624px;width:126px;height:47px"></div>
<div class="box" style="left:1px;top:673px;width:379px;height:44px"></div>
<div class="circ" style="left:2px;top:626px;width:19px;height:19px;background:#ee1010">1</div>
<div class="t" style="left:22px;top:628px;color:#bc1818">5V-</div>
<div class="t" style="left:126px;top:628px;color:#bc1818">0.00div</div>
<div class="circ" style="left:2px;top:650px;width:19px;height:19px;background:#e8e818">2</div>
<div class="t" style="left:22px;top:652px;color:#d8d840">2V-</div>
<div class="t" style="left:126px;top:652px;color:#d8d840">0.00div</div>
<div class="t" style="left:268px;top:627px;color:#d8d8d8">(500S/s)</div>
<div class="t" style="left:262px;top:651px;color:#d8d8d8">Depth:10K</div>
<div class="circ" style="left:2px;top:675px;width:19px;height:19px;background:#e8e818">2</div>
<div class="t" style="left:25px;top:677px;color:#d8d840">F:  ?</div>
<div class="circ" style="left:2px;top:697px;width:19px;height:19px;background:#e8e818">2</div>
<div class="t" style="left:25px;top:699px;color:#d8d840">+D:60.0%</div>
<div class="circ" style="left:192px;top:675px;width:19px;height:19px;background:#e8e818">2</div>
<div class="t" style="left:216px;top:677px;color:#d8d840">Vk:2.350v</div>
<div class="circ" style="left:192px;top:697px;width:19px;height:19px;background:#e8e818">2</div>
<div class="t" style="left:216px;top:698px;color:#d8d840">V:1.880v</div>
<div class="pill" style="left:383px;top:624px;width:118px;height:21px"></div>
<div class="t" style="left:403px;top:626px;color:#d8d8d8">M:1.0s</div>
<div class="a" style="left:383px;top:645px;width:574px;height:72px;background:#0460a0"></div>
<div class="a" style="left:387px;top:649px;width:108px;height:66px;box-shadow:0 0 0 1px #0454a8;background:#0080e0;border-top:2px solid #60b0f0;border-left:2px solid #40a0ec;border-right:2px solid #0450a0;border-bottom:3px solid #0448a0;box-sizing:border-box;border-radius:3px"></div>
<div class="t" style="left:414px;top:660px;color:#08205a;-webkit-text-stroke:0.5px #08205a">Type</div>
<div class="a" style="left:409px;top:685px;width:60px;height:24px;background:#ebe6e6"></div>
<div class="t" style="left:410px;top:688px;color:#000">Image</div>
<div class="a" style="left:717px;top:649px;width:106px;height:66px;box-shadow:0 0 0 1px #0454a8;background:#0080e0;border-top:2px solid #60b0f0;border-left:2px solid #40a0ec;border-right:2px solid #0450a0;border-bottom:3px solid #0448a0;box-sizing:border-box;border-radius:3px"></div>
<div class="a" style="left:745px;top:674px;color:#08205a;font-family:'Liberation Sans',sans-serif;font-size:17px;line-height:17px;letter-spacing:2.3px;-webkit-text-stroke:0.5px #08205a;white-space:pre">Save</div>
<div class="pill" style="left:797px;top:624px;width:156px;height:21px"></div>
<div class="circ" style="left:801px;top:625px;width:19px;height:19px;background:#ee1010">1</div>
<svg class="a" style="left:820px;top:624px" width="28" height="20" viewBox="0 0 28 20">
<path d="M2.5 17.5h10l3-14h10" stroke="#e8e8e8" stroke-width="1.8" fill="none"/>
</svg>
<div class="t" style="left:847px;top:628px;color:#d8d8d8">0.00mV</div>
</body></html>
